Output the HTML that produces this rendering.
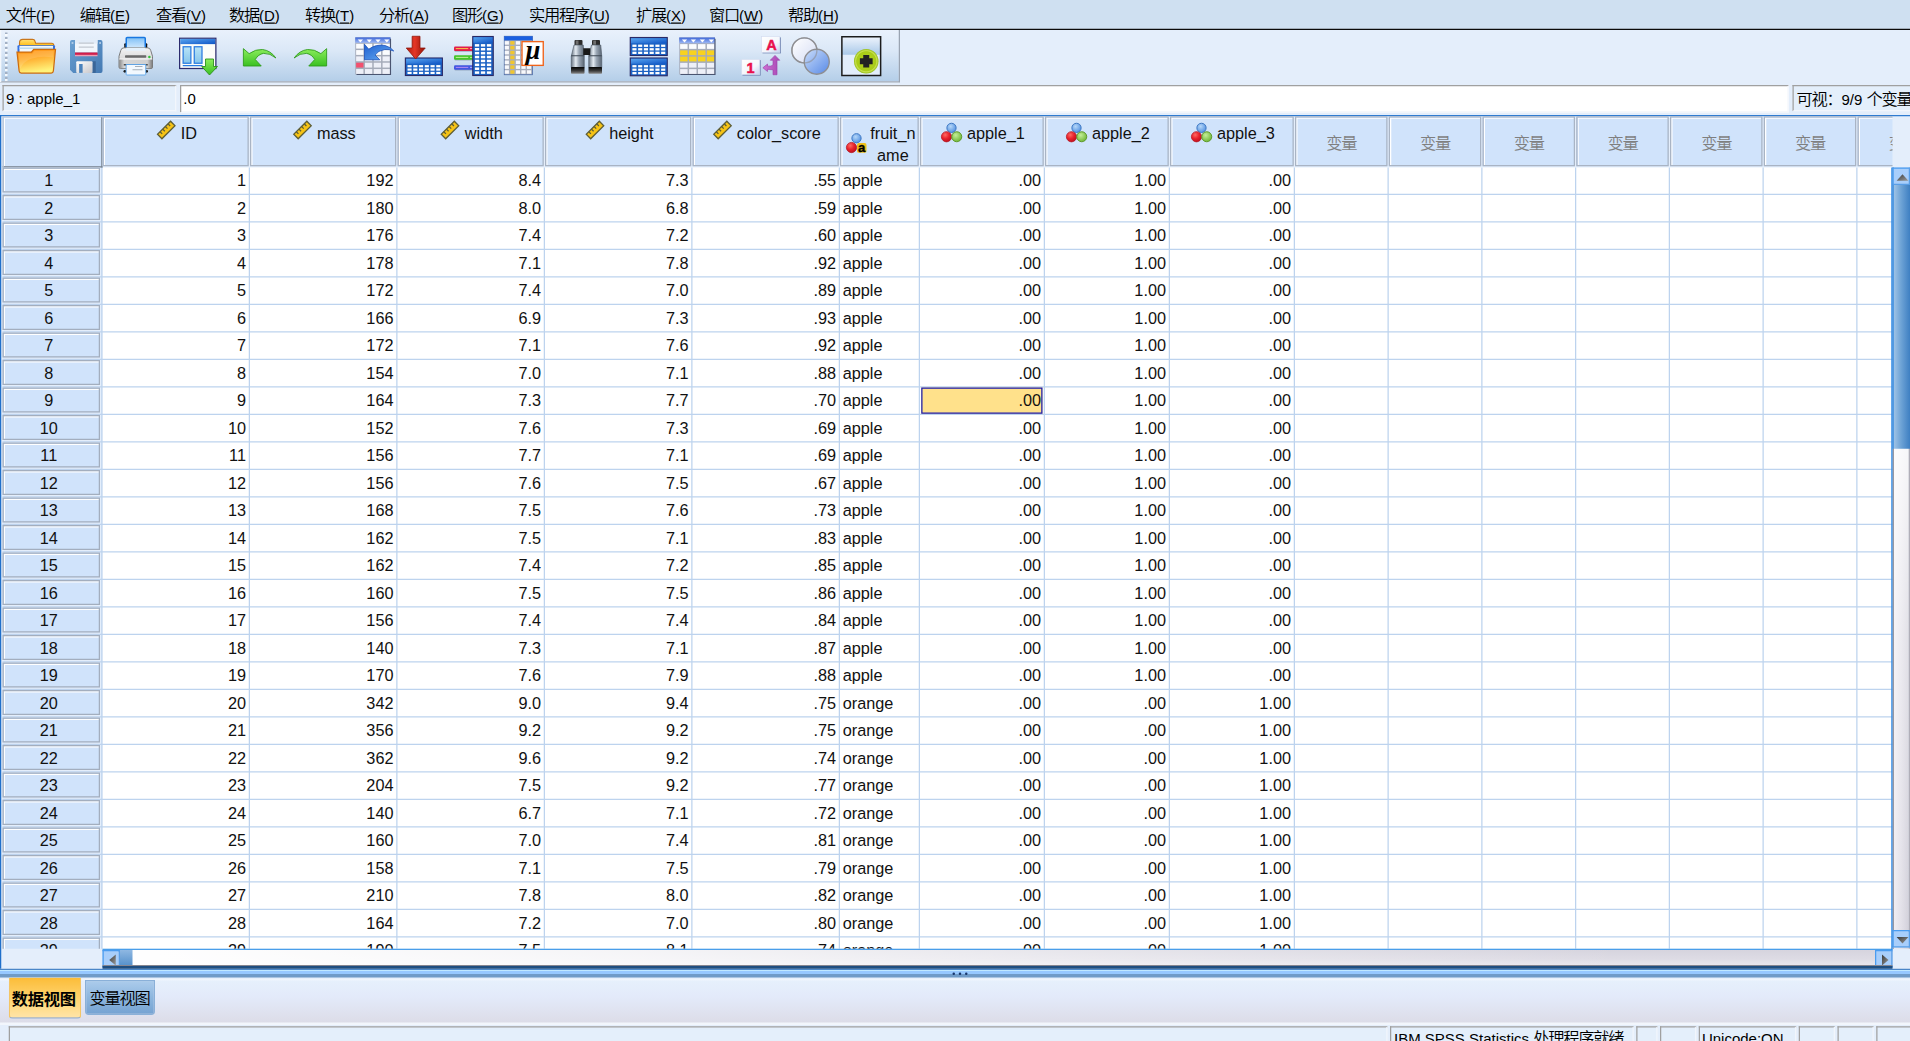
<!DOCTYPE html>
<html><head><meta charset="utf-8"><title>SPSS</title>
<style>
html,body{margin:0;padding:0;background:#e4eefb;overflow:hidden;width:1910px;height:1041px}
#app{position:absolute;left:0;top:0;width:1528px;height:833px;transform:scale(1.25);transform-origin:0 0;
 background:#e4eefb;overflow:hidden;font-family:"Liberation Sans","Noto Sans CJK SC",sans-serif;}
#app div,#app svg{position:absolute;box-sizing:border-box}
.t{white-space:nowrap}
.c{font-size:13px;letter-spacing:-1px;font-weight:350}
u{text-decoration:underline;text-underline-offset:1.1px;text-decoration-thickness:1px}
#menubar{left:0;top:0;width:1528px;height:23px;background:#cfe0f1}
#menuline{left:0;top:23px;width:1528px;height:1px;background:#0a0a0a}
#toolbar{left:0;top:24px;width:720px;height:42px;background:linear-gradient(#e9f1fc 0%,#dbe8f7 40%,#b4cee8 100%);
 border-right:1px solid #9aa4b2;border-bottom:1px solid #a3abb6;border-left:1px solid #f4f8fd}
#grip{left:3px;top:2px;width:2px;height:39px;background:repeating-linear-gradient(#a3b0c3 0 1.6px,rgba(255,255,255,.85) 1.6px 2.6px,transparent 2.6px 4px)}
.sunk{border-top:1px solid #a0a0a0;border-left:1px solid #a0a0a0;border-right:1px solid #f2f6fc;border-bottom:1px solid #f2f6fc}
#gridtop{left:0;top:92px;width:1528px;height:1px;background:#2f7bd0}
#gridleft{left:0;top:92px;width:1px;height:683px;background:#1f6fca}
#gridarea{left:0;top:0;width:1514px;height:759px;overflow:hidden}
#databg{background:#fff}
.vl{width:1px;background:#bdd3ee}
.hl{left:2px;width:1520px;height:1px;background:#bdd3ee}
.hc{top:93px;height:40px;background:#d0e3fb;border:1px solid #a9b4c4;box-shadow:inset 1px 1px 0 #fff}
.corner{left:2px;top:93px;width:80px;height:41px;background:#d0e3fb;border-top:1px solid #b7c4d6;border-left:1px solid #b7c4d6;border-right:1px solid #76808c;border-bottom:1px solid #76808c;box-shadow:inset 1px 1px 0 #fff}
.rh{left:2px;width:78px;height:20px;background:#d0e3fb;border:1px solid #a3aebe;box-shadow:inset 1px 1px 0 #fff}
.sel{background:#ffe18b;border:1px solid #1a1ab0}
.ic{overflow:visible}
#vsb{left:1514px;top:134px;width:14px;height:625px}
.vtrack{left:0;top:0;width:14px;height:625px;background:linear-gradient(rgba(255,255,255,.95) 30%,rgba(255,255,255,.35) 60%,rgba(255,255,255,0) 100%),linear-gradient(90deg,#efedf2 0%,#e2e0e8 50%,#d2d0da 100%);border-left:1px solid #7c7c86;border-right:1px solid #b0aeb8}
.vthumb{left:0;top:14px;width:14px;height:211px;background:linear-gradient(90deg,#9fc3e6 0%,#6ea3d6 45%,#3e7fc2 100%);border-left:1px solid #3b96f0}
.sbtn{width:14px;height:14px;background:#a8cefb;border:1px solid #4a9cf0;border-bottom-color:#5a9ee6;border-right-color:#5a9ee6}
#gridright{left:1513px;top:134px;width:1px;height:626px;background:#2f8ae8}
#gridbot{left:82px;top:758.8px;width:1432px;height:1.4px;background:#4a9eea}
#hsb{left:82px;top:760px;width:1432px;height:14px}
.htrack{left:0;top:0;width:1432px;height:14px;background:linear-gradient(#d6d4de 0%,#dddbe4 50%,#ebeaf0 100%);}
.htrack::after{content:"";position:absolute;left:0;top:0;right:0;bottom:0;background:linear-gradient(90deg,#fff 0%,rgba(255,255,255,.75) 30%,rgba(255,255,255,.4) 55%,rgba(255,255,255,0) 85%)}
.hthumb{left:14px;top:0;width:10px;height:14px;background:linear-gradient(#8fb8e2,#4f8cc8);}
#divider{left:0;top:775.2px;width:1528px;height:7.2px;background:linear-gradient(#4a86c8 0 1px,#c0e8ff 1px 2px,#96c8ff 2px 4px,#6f9bc8 4px 7.2px)}
#hsbsh{left:82px;top:772.4px;width:1432px;height:2.3px;background:linear-gradient(#85858f 0 1.1px,#1f4e80 1.1px 2.3px)}
.dot{width:2.4px;height:2.4px;border-radius:50%;background:#17356a}
#tabpanel{left:0;top:783px;width:1528px;height:36px;background:linear-gradient(#f4f8fd 0,#e6f0fc 2px,#e3eafa 40%,#dcdce7 100%)}
#tab1{left:6.6px;top:782px;width:58.6px;height:32.7px;background:linear-gradient(#fbbc38,#ffd777 60%,#ffe4a8);border:1px solid #f3c566;border-top:none;border-bottom:1px solid #88a8d0;border-radius:0 0 3px 3px}
#tab2{left:68px;top:784px;width:56px;height:28px;background:linear-gradient(#abcbeb,#8db6de 50%,#76a3d2);border:1px solid #8ab0d8;border-radius:0 0 3px 3px}
#status{left:0;top:818px;width:1528px;height:15px;background:linear-gradient(#f2f6fc 0 2px,#e4eefb 2px)}
.sb{background:#e4effb}
</style></head><body><div id="app">
<div id="menubar"></div><div id="menuline"></div>
<div class="t " style="left:4.7px;top:5.14px;font-size:12px;line-height:16px;color:#000;"><span class="c">文件</span>(<u>F</u>)</div>
<div class="t " style="left:63.9px;top:5.14px;font-size:12px;line-height:16px;color:#000;"><span class="c">编辑</span>(<u>E</u>)</div>
<div class="t " style="left:124.8px;top:5.14px;font-size:12px;line-height:16px;color:#000;"><span class="c">查看</span>(<u>V</u>)</div>
<div class="t " style="left:183.2px;top:5.14px;font-size:12px;line-height:16px;color:#000;"><span class="c">数据</span>(<u>D</u>)</div>
<div class="t " style="left:244px;top:5.14px;font-size:12px;line-height:16px;color:#000;"><span class="c">转换</span>(<u>T</u>)</div>
<div class="t " style="left:303.2px;top:5.14px;font-size:12px;line-height:16px;color:#000;"><span class="c">分析</span>(<u>A</u>)</div>
<div class="t " style="left:361.6px;top:5.14px;font-size:12px;line-height:16px;color:#000;"><span class="c">图形</span>(<u>G</u>)</div>
<div class="t " style="left:423.2px;top:5.14px;font-size:12px;line-height:16px;color:#000;"><span class="c">实用程序</span>(<u>U</u>)</div>
<div class="t " style="left:508.8px;top:5.14px;font-size:12px;line-height:16px;color:#000;"><span class="c">扩展</span>(<u>X</u>)</div>
<div class="t " style="left:567.2px;top:5.14px;font-size:12px;line-height:16px;color:#000;"><span class="c">窗口</span>(<u>W</u>)</div>
<div class="t " style="left:630.4px;top:5.14px;font-size:12px;line-height:16px;color:#000;"><span class="c">帮助</span>(<u>H</u>)</div>
<div id="toolbar"><div id="grip"></div></div>
<svg class="ic" style="left:13px;top:29px" width="32" height="32" viewBox="0 0 32 32"><path d="M2.6 14 V5.2 Q2.6 2.5 5.2 2.5 H13 Q14.6 2.5 15 4 L15.5 5.6 H28.4 Q30 5.6 30 7.2 V14 Z" fill="url(#gFoldB)" stroke="#c9761a" stroke-width="0.9"/><rect x="1" y="7.2" width="30" height="5.5" rx="0.8" fill="#2f6fe4"/><rect x="2.6" y="7.8" width="26.8" height="6" fill="#f2f7fc"/><path d="M2.6 9.6 H29.4" stroke="#b8dcf4" stroke-width="1.2"/><path d="M0.6 12.6 H12.2 L14 10.4 H31.4 L29.7 27.8 Q29.5 29.4 28 29.4 H4 Q2.5 29.4 2.3 27.8 Z" fill="url(#gFoldF)" stroke="#cc6c10" stroke-width="1"/><path d="M2 14 H12.8 L14.6 11.8 H30 L29.4 17 Q20 15.5 12 18 Q6 20 3 26 Z" fill="#fff" opacity="0.13"/></svg>
<svg class="ic" style="left:53px;top:29px" width="32" height="32" viewBox="0 0 32 32"><path d="M4.5 3 H27.5 Q29 3 29 4.5 V27.8 Q29 29.3 27.5 29.3 H5.6 L3 26.8 V4.5 Q3 3 4.5 3 Z" fill="url(#gFlop)"/><rect x="7" y="2.9" width="18" height="10.2" fill="#f1f6fc"/><rect x="7" y="2.9" width="18" height="3" fill="#e2ecf8"/><path d="M10 5.5 H22 M10 8.6 H22" stroke="#c2c8d0" stroke-width="1"/><rect x="7" y="13" width="18" height="1.9" fill="#d61c48"/><rect x="7" y="14.9" width="18" height="1.1" fill="#f29ab0"/><rect x="21" y="20" width="2.6" height="9.3" fill="#3a6698"/><rect x="8" y="20" width="13" height="9.3" rx="0.8" fill="url(#gMetal)"/><rect x="10.3" y="22.2" width="2.8" height="7.1" fill="#4a82bc"/><rect x="4.3" y="4.8" width="1.4" height="1.2" fill="#c4d8ee"/><rect x="26.4" y="4.8" width="1.4" height="1.2" fill="#c4d8ee"/></svg>
<svg class="ic" style="left:93px;top:29px" width="32" height="32" viewBox="0 0 32 32"><rect x="6.4" y="5.5" width="2" height="5.5" rx="0.8" fill="#101010"/><rect x="22.8" y="5.5" width="2" height="5.5" rx="0.8" fill="#101010"/><rect x="8" y="1" width="15.2" height="11" rx="0.8" fill="url(#gPaperB)" stroke="#1877e0" stroke-width="1.2"/><path d="M3.6 11.4 Q4 9.2 6.4 9.2 H24.8 Q27.2 9.2 27.6 11.4 L29 16 V24.6 Q29 25.8 27.8 25.8 H3.4 Q2.2 25.8 2.2 24.6 V16 Z" fill="url(#gPrTop)" stroke="#6c6c6c" stroke-width="0.7"/><rect x="8" y="9.2" width="15.2" height="2.4" fill="#e4f1fc"/><rect x="2.4" y="18.2" width="26.4" height="7.4" fill="url(#gPrBot)"/><path d="M2.4 18.2 H28.8" stroke="#fafafa" stroke-width="0.8"/><rect x="7" y="15.2" width="17" height="1.9" rx="0.5" fill="#6a6a6a"/><circle cx="26.5" cy="16.6" r="1" fill="#34c43a"/><circle cx="6.9" cy="28" r="1.1" fill="#1a1a1a"/><circle cx="24.3" cy="28" r="1.1" fill="#1a1a1a"/><path d="M6 22.2 H25.2 V23.4 H6 Z" fill="#4a4a4a"/><path d="M7.9 22.6 H23.6 V30.4 Q23.6 31 23 31 H8.5 Q7.9 31 7.9 30.4 Z" fill="#f2f8fe" stroke="#58a4ea" stroke-width="0.7"/><path d="M15 24.2 H21 M13 26.8 H21" stroke="#a6aeb8" stroke-width="0.9"/></svg>
<svg class="ic" style="left:143px;top:29px" width="32" height="32" viewBox="0 0 32 32"><rect x="0.7" y="1.6" width="29" height="24.2" fill="#fdfdf9" stroke="#2c2c6e" stroke-width="1"/><rect x="1.2" y="2.1" width="28" height="4.2" fill="url(#gTitle)"/><rect x="3.5" y="8.4" width="6.2" height="13.2" fill="url(#gPanel)" stroke="#2a7be0" stroke-width="1"/><rect x="12.4" y="8.4" width="6.2" height="13.2" fill="url(#gPanel)" stroke="#2a7be0" stroke-width="1"/><path d="M3.2 23.5 H19" stroke="#2a7be0" stroke-width="1"/><path d="M21.4 18.2 H27.8 V24.2 H31 L24.6 31 L18.4 24.2 H21.4 Z" fill="url(#gGreen)" stroke="#2a8e1a" stroke-width="0.7"/></svg>
<svg class="ic" style="left:193px;top:29px" width="32" height="32" viewBox="0 0 32 32"><path d="M1.7 9.9 L6.3 13.9 Q11.5 10.2 17 10.6 Q23.5 11.4 27.7 17.4 Q23 13.4 17.8 13.7 Q13.6 14.4 11.2 18.6 L16 23.8 H1.7 Z" fill="url(#gGreen)" stroke="#2e9a1a" stroke-width="0.7" stroke-linejoin="round"/></svg>
<svg class="ic" style="left:233px;top:29px" width="32" height="32" viewBox="0 0 32 32"><g transform="translate(30 0) scale(-1 1)"><path d="M1.7 9.9 L6.3 13.9 Q11.5 10.2 17 10.6 Q23.5 11.4 27.7 17.4 Q23 13.4 17.8 13.7 Q13.6 14.4 11.2 18.6 L16 23.8 H1.7 Z" fill="url(#gGreen)" stroke="#2e9a1a" stroke-width="0.7" stroke-linejoin="round"/></g></svg>
<svg class="ic" style="left:283px;top:29px" width="32" height="32" viewBox="0 0 32 32"><rect x="1.2" y="0.9" width="28.2" height="29.7" fill="#a6acba"/><rect x="1.2" y="0.9" width="28.2" height="4.4" fill="url(#gHdr)"/><rect x="1.90" y="6.00" width="5.85" height="3.86" fill="#fbfcfe"/><rect x="8.95" y="6.00" width="5.85" height="3.86" fill="#fbfcfe"/><rect x="16.00" y="6.00" width="5.85" height="3.86" fill="#fbfcfe"/><rect x="23.05" y="6.00" width="5.85" height="3.86" fill="#fbfcfe"/><rect x="1.90" y="11.06" width="5.85" height="3.86" fill="#fbfcfe"/><rect x="8.95" y="11.06" width="5.85" height="3.86" fill="#fbfcfe"/><rect x="16.00" y="11.06" width="5.85" height="3.86" fill="#fbfcfe"/><rect x="23.05" y="11.06" width="5.85" height="3.86" fill="#fbfcfe"/><rect x="1.90" y="16.12" width="5.85" height="3.86" fill="#eef0f8"/><rect x="8.95" y="16.12" width="5.85" height="3.86" fill="#eef0f8"/><rect x="16.00" y="16.12" width="5.85" height="3.86" fill="#eef0f8"/><rect x="23.05" y="16.12" width="5.85" height="3.86" fill="#eef0f8"/><rect x="1.90" y="21.18" width="5.85" height="3.86" fill="#f2506e"/><rect x="8.95" y="21.18" width="5.85" height="3.86" fill="#eef0f8"/><rect x="16.00" y="21.18" width="5.85" height="3.86" fill="#eef0f8"/><rect x="23.05" y="21.18" width="5.85" height="3.86" fill="#eef0f8"/><rect x="1.90" y="26.24" width="5.85" height="3.86" fill="#eef0f8"/><rect x="8.95" y="26.24" width="5.85" height="3.86" fill="#eef0f8"/><rect x="16.00" y="26.24" width="5.85" height="3.86" fill="#eef0f8"/><rect x="23.05" y="26.24" width="5.85" height="3.86" fill="#eef0f8"/><path d="M3.22 2.5 h4.2 l-2.1 2.4 z" fill="#fff"/><path d="M10.28 2.5 h4.2 l-2.1 2.4 z" fill="#fff"/><path d="M17.32 2.5 h4.2 l-2.1 2.4 z" fill="#fff"/><path d="M24.37 2.5 h4.2 l-2.1 2.4 z" fill="#fff"/><path d="M29.4 1.9 V30.599999999999998 H2.2" fill="none" stroke="#4a5470" stroke-width="0.9"/><path d="M8.6 6.4 L12 10.4 Q18 6 25 7.4 Q29.6 8.6 32 11.8 Q28.4 10.2 24.8 10.6 Q19.4 11.4 17 15 L20.8 18.8 H8.6 Z" fill="url(#gBlueArr)" stroke="#1c50b8" stroke-width="0.6" stroke-linejoin="round"/></svg>
<svg class="ic" style="left:323px;top:29px" width="32" height="32" viewBox="0 0 32 32"><rect x="1.3" y="17.4" width="29.6" height="14" fill="#1b62c4" stroke="#2a2a66" stroke-width="0.9"/><rect x="1.9" y="18.0" width="28.400000000000002" height="4" fill="url(#gTitle)"/><rect x="3.00" y="23.10" width="3.31" height="1.73" fill="#fff"/><rect x="7.60" y="23.10" width="3.31" height="1.73" fill="#fff"/><rect x="12.20" y="23.10" width="3.31" height="1.73" fill="#fff"/><rect x="16.80" y="23.10" width="3.31" height="1.73" fill="#fff"/><rect x="21.40" y="23.10" width="3.31" height="1.73" fill="#fff"/><rect x="26.00" y="23.10" width="3.31" height="1.73" fill="#fff"/><rect x="3.00" y="25.80" width="3.31" height="1.73" fill="#fff"/><rect x="7.60" y="25.80" width="3.31" height="1.73" fill="#fff"/><rect x="12.20" y="25.80" width="3.31" height="1.73" fill="#fff"/><rect x="16.80" y="25.80" width="3.31" height="1.73" fill="#fff"/><rect x="21.40" y="25.80" width="3.31" height="1.73" fill="#fff"/><rect x="26.00" y="25.80" width="3.31" height="1.73" fill="#fff"/><rect x="3.00" y="28.50" width="3.31" height="1.73" fill="#fff"/><rect x="7.60" y="28.50" width="3.31" height="1.73" fill="#fff"/><rect x="12.20" y="28.50" width="3.31" height="1.73" fill="#fff"/><rect x="16.80" y="28.50" width="3.31" height="1.73" fill="#fff"/><rect x="21.40" y="28.50" width="3.31" height="1.73" fill="#fff"/><rect x="26.00" y="28.50" width="3.31" height="1.73" fill="#fff"/><path d="M6.7 0 H13 V9.4 H17.2 L9.5 18.2 L2 9.4 H6.7 Z" fill="url(#gRed)" stroke="#8e1408" stroke-width="0.6" stroke-linejoin="round"/></svg>
<svg class="ic" style="left:363px;top:29px" width="32" height="32" viewBox="0 0 32 32"><rect x="0.6" y="10.7" width="17" height="1.6" rx="0.8" fill="#5a6a86" opacity="0.45"/><rect x="0.2" y="8.1" width="17.6" height="3.6" rx="1" fill="#e21c4a"/><rect x="1.6" y="9.4" width="10" height="0.9" fill="#f6b64a"/><rect x="13" y="9.4" width="2.4" height="0.9" fill="#f6a0b4"/><rect x="0.6" y="17.8" width="17" height="1.6" rx="0.8" fill="#5a6a86" opacity="0.45"/><rect x="0.2" y="15.2" width="17.6" height="3.6" rx="1" fill="#44c428"/><rect x="1.6" y="16.5" width="10" height="0.9" fill="#b4ec8c"/><rect x="13" y="16.5" width="2.4" height="0.9" fill="#b4ec8c"/><rect x="0.6" y="25.8" width="17" height="1.6" rx="0.8" fill="#5a6a86" opacity="0.45"/><rect x="0.2" y="23.2" width="17.6" height="3.6" rx="1" fill="#4256e0"/><rect x="1.6" y="24.5" width="10" height="0.9" fill="#a884f0"/><rect x="13" y="24.5" width="2.4" height="0.9" fill="#98a8f8"/><rect x="15.2" y="0.2" width="16.4" height="31.2" fill="#1b62c4" stroke="#2a2a66" stroke-width="0.9"/><rect x="15.799999999999999" y="0.8" width="15.2" height="4.4" fill="url(#gTitle)"/><rect x="16.90" y="6.30" width="3.46" height="1.99" fill="#fff"/><rect x="21.70" y="6.30" width="3.46" height="1.99" fill="#fff"/><rect x="26.50" y="6.30" width="3.46" height="1.99" fill="#fff"/><rect x="16.90" y="9.41" width="3.46" height="1.99" fill="#fff"/><rect x="21.70" y="9.41" width="3.46" height="1.99" fill="#fff"/><rect x="26.50" y="9.41" width="3.46" height="1.99" fill="#fff"/><rect x="16.90" y="12.53" width="3.46" height="1.99" fill="#fff"/><rect x="21.70" y="12.53" width="3.46" height="1.99" fill="#fff"/><rect x="26.50" y="12.53" width="3.46" height="1.99" fill="#fff"/><rect x="16.90" y="15.64" width="3.46" height="1.99" fill="#fff"/><rect x="21.70" y="15.64" width="3.46" height="1.99" fill="#fff"/><rect x="26.50" y="15.64" width="3.46" height="1.99" fill="#fff"/><rect x="16.90" y="18.75" width="3.46" height="1.99" fill="#fff"/><rect x="21.70" y="18.75" width="3.46" height="1.99" fill="#fff"/><rect x="26.50" y="18.75" width="3.46" height="1.99" fill="#fff"/><rect x="16.90" y="21.86" width="3.46" height="1.99" fill="#fff"/><rect x="21.70" y="21.86" width="3.46" height="1.99" fill="#fff"/><rect x="26.50" y="21.86" width="3.46" height="1.99" fill="#fff"/><rect x="16.90" y="24.97" width="3.46" height="1.99" fill="#fff"/><rect x="21.70" y="24.97" width="3.46" height="1.99" fill="#fff"/><rect x="26.50" y="24.97" width="3.46" height="1.99" fill="#fff"/><rect x="16.90" y="28.09" width="3.46" height="1.99" fill="#fff"/><rect x="21.70" y="28.09" width="3.46" height="1.99" fill="#fff"/><rect x="26.50" y="28.09" width="3.46" height="1.99" fill="#fff"/></svg>
<svg class="ic" style="left:403px;top:29px" width="32" height="32" viewBox="0 0 32 32"><rect x="0.4" y="0" width="22.6" height="30.8" fill="#a8aebc" stroke="#4a6aa8" stroke-width="0.6"/><rect x="0.4" y="0" width="22.6" height="3.3" fill="#1a5fe0"/><rect x="0.80" y="3.90" width="3.34" height="2.79" fill="#f8f9fc"/><rect x="5.24" y="3.90" width="3.34" height="2.79" fill="#f0c630"/><rect x="9.68" y="3.90" width="3.34" height="2.79" fill="#f8f9fc"/><rect x="14.12" y="3.90" width="3.34" height="2.79" fill="#f8f9fc"/><rect x="18.56" y="3.90" width="3.34" height="2.79" fill="#f8f9fc"/><rect x="0.80" y="7.79" width="3.34" height="2.79" fill="#f8f9fc"/><rect x="5.24" y="7.79" width="3.34" height="2.79" fill="#f0c630"/><rect x="9.68" y="7.79" width="3.34" height="2.79" fill="#f8f9fc"/><rect x="14.12" y="7.79" width="3.34" height="2.79" fill="#f8f9fc"/><rect x="18.56" y="7.79" width="3.34" height="2.79" fill="#f8f9fc"/><rect x="0.80" y="11.67" width="3.34" height="2.79" fill="#f8f9fc"/><rect x="5.24" y="11.67" width="3.34" height="2.79" fill="#f0c630"/><rect x="9.68" y="11.67" width="3.34" height="2.79" fill="#f8f9fc"/><rect x="14.12" y="11.67" width="3.34" height="2.79" fill="#f8f9fc"/><rect x="18.56" y="11.67" width="3.34" height="2.79" fill="#f8f9fc"/><rect x="0.80" y="15.56" width="3.34" height="2.79" fill="#f8f9fc"/><rect x="5.24" y="15.56" width="3.34" height="2.79" fill="#f0c630"/><rect x="9.68" y="15.56" width="3.34" height="2.79" fill="#f8f9fc"/><rect x="14.12" y="15.56" width="3.34" height="2.79" fill="#f8f9fc"/><rect x="18.56" y="15.56" width="3.34" height="2.79" fill="#f8f9fc"/><rect x="0.80" y="19.44" width="3.34" height="2.79" fill="#f8f9fc"/><rect x="5.24" y="19.44" width="3.34" height="2.79" fill="#f0c630"/><rect x="9.68" y="19.44" width="3.34" height="2.79" fill="#f8f9fc"/><rect x="14.12" y="19.44" width="3.34" height="2.79" fill="#f8f9fc"/><rect x="18.56" y="19.44" width="3.34" height="2.79" fill="#f8f9fc"/><rect x="0.80" y="23.33" width="3.34" height="2.79" fill="#f8f9fc"/><rect x="5.24" y="23.33" width="3.34" height="2.79" fill="#f0c630"/><rect x="9.68" y="23.33" width="3.34" height="2.79" fill="#f8f9fc"/><rect x="14.12" y="23.33" width="3.34" height="2.79" fill="#f8f9fc"/><rect x="18.56" y="23.33" width="3.34" height="2.79" fill="#f8f9fc"/><rect x="0.80" y="27.21" width="3.34" height="2.79" fill="#f8f9fc"/><rect x="5.24" y="27.21" width="3.34" height="2.79" fill="#f0c630"/><rect x="9.68" y="27.21" width="3.34" height="2.79" fill="#f8f9fc"/><rect x="14.12" y="27.21" width="3.34" height="2.79" fill="#f8f9fc"/><rect x="18.56" y="27.21" width="3.34" height="2.79" fill="#f8f9fc"/><rect x="14.6" y="4.3" width="17" height="19" fill="#fff" stroke="#f0641c" stroke-width="1.1"/><text x="23.4" y="17.8" font-family="Liberation Serif,serif" font-size="21" font-weight="bold" font-style="italic" text-anchor="middle" fill="#000">μ</text></svg>
<svg class="ic" style="left:453px;top:29px" width="32" height="32" viewBox="0 0 32 32"><rect x="6.6" y="2.9" width="6.4" height="4.4" rx="0.8" fill="#2c2c2c"/><rect x="7.6" y="3.4" width="2.2" height="3.4" fill="#8a8a8a" opacity="0.7"/><path d="M6.2 7 H13.6 L14.4 16 V25 H4 V16 Z" fill="url(#gBino)" stroke="#4c5664" stroke-width="0.5"/><path d="M4 15.6 H14.4" stroke="#3e4854" stroke-width="0.8"/><rect x="3.8" y="24.6" width="10.8" height="5.4" rx="0.6" fill="url(#gBinoB)"/><rect x="20.6" y="2.9" width="6.4" height="4.4" rx="0.8" fill="#2c2c2c"/><rect x="21.6" y="3.4" width="2.2" height="3.4" fill="#8a8a8a" opacity="0.7"/><path d="M20.2 7 H27.6 L28.4 16 V25 H18 V16 Z" fill="url(#gBino)" stroke="#4c5664" stroke-width="0.5"/><path d="M18 15.6 H28.4" stroke="#3e4854" stroke-width="0.8"/><rect x="17.8" y="24.6" width="10.8" height="5.4" rx="0.6" fill="url(#gBinoB)"/><rect x="13.6" y="9.6" width="5.6" height="5.4" fill="#181818"/></svg>
<svg class="ic" style="left:503px;top:29px" width="32" height="32" viewBox="0 0 32 32"><rect x="1.2" y="1" width="29.6" height="14.4" fill="#1b62c4" stroke="#2a2a66" stroke-width="0.9"/><rect x="1.7999999999999998" y="1.6" width="28.400000000000002" height="4" fill="url(#gTitle)"/><rect x="2.90" y="6.70" width="3.31" height="1.81" fill="#fff"/><rect x="7.50" y="6.70" width="3.31" height="1.81" fill="#fff"/><rect x="12.10" y="6.70" width="3.31" height="1.81" fill="#fff"/><rect x="16.70" y="6.70" width="3.31" height="1.81" fill="#fff"/><rect x="21.30" y="6.70" width="3.31" height="1.81" fill="#fff"/><rect x="25.90" y="6.70" width="3.31" height="1.81" fill="#fff"/><rect x="2.90" y="9.53" width="3.31" height="1.81" fill="#fff"/><rect x="7.50" y="9.53" width="3.31" height="1.81" fill="#fff"/><rect x="12.10" y="9.53" width="3.31" height="1.81" fill="#fff"/><rect x="16.70" y="9.53" width="3.31" height="1.81" fill="#fff"/><rect x="21.30" y="9.53" width="3.31" height="1.81" fill="#fff"/><rect x="25.90" y="9.53" width="3.31" height="1.81" fill="#fff"/><rect x="2.90" y="12.37" width="3.31" height="1.81" fill="#fff"/><rect x="7.50" y="12.37" width="3.31" height="1.81" fill="#fff"/><rect x="12.10" y="12.37" width="3.31" height="1.81" fill="#fff"/><rect x="16.70" y="12.37" width="3.31" height="1.81" fill="#fff"/><rect x="21.30" y="12.37" width="3.31" height="1.81" fill="#fff"/><rect x="25.90" y="12.37" width="3.31" height="1.81" fill="#fff"/><rect x="1.2" y="17.4" width="29.6" height="14.2" fill="#1b62c4" stroke="#2a2a66" stroke-width="0.9"/><rect x="1.7999999999999998" y="18.0" width="28.400000000000002" height="4" fill="url(#gTitle)"/><rect x="2.90" y="23.10" width="3.31" height="1.77" fill="#fff"/><rect x="7.50" y="23.10" width="3.31" height="1.77" fill="#fff"/><rect x="12.10" y="23.10" width="3.31" height="1.77" fill="#fff"/><rect x="16.70" y="23.10" width="3.31" height="1.77" fill="#fff"/><rect x="21.30" y="23.10" width="3.31" height="1.77" fill="#fff"/><rect x="25.90" y="23.10" width="3.31" height="1.77" fill="#fff"/><rect x="2.90" y="25.87" width="3.31" height="1.77" fill="#fff"/><rect x="7.50" y="25.87" width="3.31" height="1.77" fill="#fff"/><rect x="12.10" y="25.87" width="3.31" height="1.77" fill="#fff"/><rect x="16.70" y="25.87" width="3.31" height="1.77" fill="#fff"/><rect x="21.30" y="25.87" width="3.31" height="1.77" fill="#fff"/><rect x="25.90" y="25.87" width="3.31" height="1.77" fill="#fff"/><rect x="2.90" y="28.63" width="3.31" height="1.77" fill="#fff"/><rect x="7.50" y="28.63" width="3.31" height="1.77" fill="#fff"/><rect x="12.10" y="28.63" width="3.31" height="1.77" fill="#fff"/><rect x="16.70" y="28.63" width="3.31" height="1.77" fill="#fff"/><rect x="21.30" y="28.63" width="3.31" height="1.77" fill="#fff"/><rect x="25.90" y="28.63" width="3.31" height="1.77" fill="#fff"/></svg>
<svg class="ic" style="left:543px;top:29px" width="32" height="32" viewBox="0 0 32 32"><rect x="0.4" y="1" width="28.6" height="29.6" fill="#a6acba"/><rect x="0.4" y="1" width="28.6" height="4.6" fill="url(#gHdr)"/><rect x="1.10" y="6.30" width="5.95" height="3.80" fill="#fbfcfe"/><rect x="8.25" y="6.30" width="5.95" height="3.80" fill="#fbfcfe"/><rect x="15.40" y="6.30" width="5.95" height="3.80" fill="#fbfcfe"/><rect x="22.55" y="6.30" width="5.95" height="3.80" fill="#fbfcfe"/><rect x="1.10" y="11.30" width="5.95" height="3.80" fill="#f8d21e"/><rect x="8.25" y="11.30" width="5.95" height="3.80" fill="#f8d21e"/><rect x="15.40" y="11.30" width="5.95" height="3.80" fill="#f8d21e"/><rect x="22.55" y="11.30" width="5.95" height="3.80" fill="#f8d21e"/><rect x="1.10" y="16.30" width="5.95" height="3.80" fill="#f8d21e"/><rect x="8.25" y="16.30" width="5.95" height="3.80" fill="#f8d21e"/><rect x="15.40" y="16.30" width="5.95" height="3.80" fill="#f8d21e"/><rect x="22.55" y="16.30" width="5.95" height="3.80" fill="#f8d21e"/><rect x="1.10" y="21.30" width="5.95" height="3.80" fill="#eef0f8"/><rect x="8.25" y="21.30" width="5.95" height="3.80" fill="#eef0f8"/><rect x="15.40" y="21.30" width="5.95" height="3.80" fill="#eef0f8"/><rect x="22.55" y="21.30" width="5.95" height="3.80" fill="#eef0f8"/><rect x="1.10" y="26.30" width="5.95" height="3.80" fill="#eef0f8"/><rect x="8.25" y="26.30" width="5.95" height="3.80" fill="#eef0f8"/><rect x="15.40" y="26.30" width="5.95" height="3.80" fill="#eef0f8"/><rect x="22.55" y="26.30" width="5.95" height="3.80" fill="#eef0f8"/><path d="M2.48 2.6 h4.2 l-2.1 2.4 z" fill="#fff"/><path d="M9.62 2.6 h4.2 l-2.1 2.4 z" fill="#fff"/><path d="M16.78 2.6 h4.2 l-2.1 2.4 z" fill="#fff"/><path d="M23.93 2.6 h4.2 l-2.1 2.4 z" fill="#fff"/><path d="M29.0 2 V30.6 H1.4" fill="none" stroke="#4a5470" stroke-width="0.9"/></svg>
<svg class="ic" style="left:593px;top:29px" width="32" height="32" viewBox="0 0 32 32"><rect x="17" y="0.9" width="14.8" height="12.8" fill="#7488b4"/><rect x="16.3" y="0.3" width="14.6" height="12.6" fill="url(#gLbl)" stroke="#d4dcf0" stroke-width="0.5"/><text x="24.2" y="11" font-family="Liberation Sans,sans-serif" font-size="11.6" font-weight="bold" text-anchor="middle" fill="#e8104c" stroke="#e8104c" stroke-width="0.4">A</text><rect x="1" y="19.1" width="14.6" height="12.4" fill="#7488b4"/><rect x="0.4" y="18.5" width="14.4" height="12.2" fill="url(#gLbl)" stroke="#d4dcf0" stroke-width="0.5"/><text x="7.4" y="29.1" font-family="Liberation Sans,sans-serif" font-size="11.6" font-weight="bold" text-anchor="middle" fill="#e8104c" stroke="#e8104c" stroke-width="0.4">1</text><path d="M25.4 30.8 V26.8 Q23.6 26.8 22.4 26.6 L21 26.4 V28.2 L17.3 25.2 L21 22.2 V23.9 Q24 24.2 25.4 23 V19.2 H23.2 L27 15.3 L30.8 19.2 H28.6 V30.8 Z" fill="url(#gPurp)" stroke="#9a3ea8" stroke-width="0.5" stroke-linejoin="round"/></svg>
<svg class="ic" style="left:633px;top:29px" width="32" height="32" viewBox="0 0 32 32"><circle cx="10.5" cy="11.3" r="10" fill="url(#gC1)" stroke="#8e8e92" stroke-width="1.1"/><circle cx="20.4" cy="20.4" r="10" fill="url(#gC2)" stroke="#8e8e92" stroke-width="1.1" fill-opacity="0.92"/><circle cx="10.5" cy="11.3" r="10" fill="none" stroke="#8e8e92" stroke-width="1.1" opacity="0.55"/></svg>
<svg class="ic" style="left:673px;top:29px" width="32" height="32" viewBox="0 0 32 32"><rect x="0.5" y="0.4" width="31" height="31" fill="#e2edfb"/><rect x="0.5" y="0.4" width="31" height="14.4" fill="url(#gBoxT)"/><rect x="0.5" y="0.4" width="31" height="31" fill="none" stroke="#1c1c1c" stroke-width="1.2"/><circle cx="20" cy="20" r="9.8" fill="url(#gLime)"/><path d="M17.6 14.9 H22.4 V17.6 H25.1 V22.4 H22.4 V25 H17.6 V22.4 H14.9 V17.6 H17.6 Z" fill="#222"/></svg>
<div class="sunk" style="left:2px;top:68px;width:139px;height:21px;background:#e4effb"></div>
<div class="t " style="left:4.9px;top:71.24px;font-size:12px;line-height:16px;color:#000;">9 : apple_1</div>
<div class="sunk" style="left:144px;top:68px;width:1287px;height:22px;background:#fff"></div>
<div class="t " style="left:146.6px;top:71.24px;font-size:12px;line-height:16px;color:#000;">.0</div>
<div class="sunk" style="left:1434px;top:68px;width:100px;height:21px;background:#e4effb"></div>
<div class="t " style="left:1437.2px;top:71.64px;font-size:12px;line-height:16px;color:#000;"><span class="c">可视：</span>9/9 <span class="c">个变量</span></div>
<div id="gridtop"></div><div id="gridleft"></div>
<div id="gridarea">
<div id="databg" style="left:82px;top:134px;width:1432px;height:625px"></div>
<div class="vl" style="left:81px;top:134px;height:626px"></div>
<div class="vl" style="left:199px;top:134px;height:626px"></div>
<div class="vl" style="left:317px;top:134px;height:626px"></div>
<div class="vl" style="left:435px;top:134px;height:626px"></div>
<div class="vl" style="left:553px;top:134px;height:626px"></div>
<div class="vl" style="left:671px;top:134px;height:626px"></div>
<div class="vl" style="left:735px;top:134px;height:626px"></div>
<div class="vl" style="left:835px;top:134px;height:626px"></div>
<div class="vl" style="left:935px;top:134px;height:626px"></div>
<div class="vl" style="left:1035px;top:134px;height:626px"></div>
<div class="vl" style="left:1110px;top:134px;height:626px"></div>
<div class="vl" style="left:1185px;top:134px;height:626px"></div>
<div class="vl" style="left:1260px;top:134px;height:626px"></div>
<div class="vl" style="left:1335px;top:134px;height:626px"></div>
<div class="vl" style="left:1410px;top:134px;height:626px"></div>
<div class="vl" style="left:1485px;top:134px;height:626px"></div>
<div class="hl" style="top:155px"></div>
<div class="hl" style="top:177px"></div>
<div class="hl" style="top:199px"></div>
<div class="hl" style="top:221px"></div>
<div class="hl" style="top:243px"></div>
<div class="hl" style="top:265px"></div>
<div class="hl" style="top:287px"></div>
<div class="hl" style="top:309px"></div>
<div class="hl" style="top:331px"></div>
<div class="hl" style="top:353px"></div>
<div class="hl" style="top:375px"></div>
<div class="hl" style="top:397px"></div>
<div class="hl" style="top:419px"></div>
<div class="hl" style="top:441px"></div>
<div class="hl" style="top:463px"></div>
<div class="hl" style="top:485px"></div>
<div class="hl" style="top:507px"></div>
<div class="hl" style="top:529px"></div>
<div class="hl" style="top:551px"></div>
<div class="hl" style="top:573px"></div>
<div class="hl" style="top:595px"></div>
<div class="hl" style="top:617px"></div>
<div class="hl" style="top:639px"></div>
<div class="hl" style="top:661px"></div>
<div class="hl" style="top:683px"></div>
<div class="hl" style="top:705px"></div>
<div class="hl" style="top:727px"></div>
<div class="hl" style="top:749px"></div>
<div class="hl" style="top:771px"></div>
<div class="corner"></div>
<div class="hc" style="left:82px;width:117px"></div>
<div class="hc" style="left:200px;width:117px"></div>
<div class="hc" style="left:318px;width:117px"></div>
<div class="hc" style="left:436px;width:117px"></div>
<div class="hc" style="left:554px;width:117px"></div>
<div class="hc" style="left:672px;width:63px"></div>
<div class="hc" style="left:736px;width:99px"></div>
<div class="hc" style="left:836px;width:99px"></div>
<div class="hc" style="left:936px;width:99px"></div>
<div class="hc" style="left:1036px;width:74px"></div>
<div class="hc" style="left:1111px;width:74px"></div>
<div class="hc" style="left:1186px;width:74px"></div>
<div class="hc" style="left:1261px;width:74px"></div>
<div class="hc" style="left:1336px;width:74px"></div>
<div class="hc" style="left:1411px;width:74px"></div>
<div class="hc" style="left:1486px;width:74px"></div>
<svg class="ic" style="left:124.75px;top:96.2px" width="16" height="16" viewBox="0 0 16 16"><g transform="rotate(-45 8 8)"><rect x="0.6" y="5.5" width="14.8" height="5" fill="#f6c315" stroke="#5e5e36" stroke-width="1"/><path d="M3.5 5.5v2.4M6.5 5.5v2.4M9.5 5.5v2.4M12.5 5.5v2.4" stroke="#5e5e36" stroke-width="1"/></g></svg>
<div class="t " style="left:144.55px;top:97.90px;font-size:13px;line-height:17px;color:#111;">ID</div>
<svg class="ic" style="left:233.72px;top:96.2px" width="16" height="16" viewBox="0 0 16 16"><g transform="rotate(-45 8 8)"><rect x="0.6" y="5.5" width="14.8" height="5" fill="#f6c315" stroke="#5e5e36" stroke-width="1"/><path d="M3.5 5.5v2.4M6.5 5.5v2.4M9.5 5.5v2.4M12.5 5.5v2.4" stroke="#5e5e36" stroke-width="1"/></g></svg>
<div class="t " style="left:253.5215px;top:97.90px;font-size:13px;line-height:17px;color:#111;">mass</div>
<svg class="ic" style="left:352.08px;top:96.2px" width="16" height="16" viewBox="0 0 16 16"><g transform="rotate(-45 8 8)"><rect x="0.6" y="5.5" width="14.8" height="5" fill="#f6c315" stroke="#5e5e36" stroke-width="1"/><path d="M3.5 5.5v2.4M6.5 5.5v2.4M9.5 5.5v2.4M12.5 5.5v2.4" stroke="#5e5e36" stroke-width="1"/></g></svg>
<div class="t " style="left:371.879px;top:97.90px;font-size:13px;line-height:17px;color:#111;">width</div>
<svg class="ic" style="left:467.54px;top:96.2px" width="16" height="16" viewBox="0 0 16 16"><g transform="rotate(-45 8 8)"><rect x="0.6" y="5.5" width="14.8" height="5" fill="#f6c315" stroke="#5e5e36" stroke-width="1"/><path d="M3.5 5.5v2.4M6.5 5.5v2.4M9.5 5.5v2.4M12.5 5.5v2.4" stroke="#5e5e36" stroke-width="1"/></g></svg>
<div class="t " style="left:487.344px;top:97.90px;font-size:13px;line-height:17px;color:#111;">height</div>
<svg class="ic" style="left:569.66px;top:96.2px" width="16" height="16" viewBox="0 0 16 16"><g transform="rotate(-45 8 8)"><rect x="0.6" y="5.5" width="14.8" height="5" fill="#f6c315" stroke="#5e5e36" stroke-width="1"/><path d="M3.5 5.5v2.4M6.5 5.5v2.4M9.5 5.5v2.4M12.5 5.5v2.4" stroke="#5e5e36" stroke-width="1"/></g></svg>
<div class="t " style="left:589.458px;top:97.90px;font-size:13px;line-height:17px;color:#111;">color_score</div>
<svg class="ic" style="left:677px;top:106px" width="17" height="17" viewBox="0 0 17 17"><circle cx="8.2" cy="4.6" r="3.7" fill="url(#bB)" stroke="#3f79c4" stroke-width="0.8"/><circle cx="4.2" cy="12" r="4.1" fill="url(#bR)" stroke="#b41622" stroke-width="0.6"/><rect x="8.6" y="8.4" width="7.6" height="7.8" rx="1.5" fill="#f0c01a"/><text x="12.4" y="15.6" font-family="Liberation Sans,sans-serif" font-weight="bold" font-size="10.5" text-anchor="middle" fill="#000" stroke="#000" stroke-width="0.3">a</text></svg>
<div class="t " style="left:696.2365px;top:97.90px;font-size:13px;line-height:17px;color:#111;">fruit_n</div>
<div class="t " style="left:701.6574999999999px;top:115.80px;font-size:13px;line-height:17px;color:#111;">ame</div>
<svg class="ic" style="left:753.12px;top:97.5px" width="16" height="16" viewBox="0 0 16 16"><circle cx="8.2" cy="4.3" r="3.7" fill="url(#bB)" stroke="#3f79c4" stroke-width="0.8"/><circle cx="4.2" cy="11.4" r="4.1" fill="url(#bR)" stroke="#b41622" stroke-width="0.6"/><circle cx="12.4" cy="11.4" r="4" fill="url(#bG)" stroke="#5f9a2c" stroke-width="0.8"/></svg>
<div class="t " style="left:773.623px;top:97.90px;font-size:13px;line-height:17px;color:#111;">apple_1</div>
<svg class="ic" style="left:853.12px;top:97.5px" width="16" height="16" viewBox="0 0 16 16"><circle cx="8.2" cy="4.3" r="3.7" fill="url(#bB)" stroke="#3f79c4" stroke-width="0.8"/><circle cx="4.2" cy="11.4" r="4.1" fill="url(#bR)" stroke="#b41622" stroke-width="0.6"/><circle cx="12.4" cy="11.4" r="4" fill="url(#bG)" stroke="#5f9a2c" stroke-width="0.8"/></svg>
<div class="t " style="left:873.623px;top:97.90px;font-size:13px;line-height:17px;color:#111;">apple_2</div>
<svg class="ic" style="left:953.12px;top:97.5px" width="16" height="16" viewBox="0 0 16 16"><circle cx="8.2" cy="4.3" r="3.7" fill="url(#bB)" stroke="#3f79c4" stroke-width="0.8"/><circle cx="4.2" cy="11.4" r="4.1" fill="url(#bR)" stroke="#b41622" stroke-width="0.6"/><circle cx="12.4" cy="11.4" r="4" fill="url(#bG)" stroke="#5f9a2c" stroke-width="0.8"/></svg>
<div class="t " style="left:973.623px;top:97.90px;font-size:13px;line-height:17px;color:#111;">apple_3</div>
<div class="t " style="left:1036px;top:106.74px;font-size:12px;line-height:16px;color:#7f7f7f;width:74px;text-align:center;"><span class="c">变量</span></div>
<div class="t " style="left:1111px;top:106.74px;font-size:12px;line-height:16px;color:#7f7f7f;width:74px;text-align:center;"><span class="c">变量</span></div>
<div class="t " style="left:1186px;top:106.74px;font-size:12px;line-height:16px;color:#7f7f7f;width:74px;text-align:center;"><span class="c">变量</span></div>
<div class="t " style="left:1261px;top:106.74px;font-size:12px;line-height:16px;color:#7f7f7f;width:74px;text-align:center;"><span class="c">变量</span></div>
<div class="t " style="left:1336px;top:106.74px;font-size:12px;line-height:16px;color:#7f7f7f;width:74px;text-align:center;"><span class="c">变量</span></div>
<div class="t " style="left:1411px;top:106.74px;font-size:12px;line-height:16px;color:#7f7f7f;width:74px;text-align:center;"><span class="c">变量</span></div>
<div class="t " style="left:1486px;top:106.74px;font-size:12px;line-height:16px;color:#7f7f7f;width:74px;text-align:center;"><span class="c">变量</span></div>
<div class="rh" style="top:134px"></div>
<div class="t " style="left:0px;top:136.30px;font-size:13px;line-height:17px;color:#111;width:78px;text-align:center;">1</div>
<div class="t " style="left:82px;top:136.30px;font-size:13px;line-height:17px;color:#111;width:114.8px;text-align:right;">1</div>
<div class="t " style="left:200px;top:136.30px;font-size:13px;line-height:17px;color:#111;width:114.8px;text-align:right;">192</div>
<div class="t " style="left:318px;top:136.30px;font-size:13px;line-height:17px;color:#111;width:114.8px;text-align:right;">8.4</div>
<div class="t " style="left:436px;top:136.30px;font-size:13px;line-height:17px;color:#111;width:114.8px;text-align:right;">7.3</div>
<div class="t " style="left:554px;top:136.30px;font-size:13px;line-height:17px;color:#111;width:114.8px;text-align:right;">.55</div>
<div class="t " style="left:674.2px;top:136.30px;font-size:13px;line-height:17px;color:#111;">apple</div>
<div class="t " style="left:736px;top:136.30px;font-size:13px;line-height:17px;color:#111;width:96.8px;text-align:right;">.00</div>
<div class="t " style="left:836px;top:136.30px;font-size:13px;line-height:17px;color:#111;width:96.8px;text-align:right;">1.00</div>
<div class="t " style="left:936px;top:136.30px;font-size:13px;line-height:17px;color:#111;width:96.8px;text-align:right;">.00</div>
<div class="rh" style="top:156px"></div>
<div class="t " style="left:0px;top:158.30px;font-size:13px;line-height:17px;color:#111;width:78px;text-align:center;">2</div>
<div class="t " style="left:82px;top:158.30px;font-size:13px;line-height:17px;color:#111;width:114.8px;text-align:right;">2</div>
<div class="t " style="left:200px;top:158.30px;font-size:13px;line-height:17px;color:#111;width:114.8px;text-align:right;">180</div>
<div class="t " style="left:318px;top:158.30px;font-size:13px;line-height:17px;color:#111;width:114.8px;text-align:right;">8.0</div>
<div class="t " style="left:436px;top:158.30px;font-size:13px;line-height:17px;color:#111;width:114.8px;text-align:right;">6.8</div>
<div class="t " style="left:554px;top:158.30px;font-size:13px;line-height:17px;color:#111;width:114.8px;text-align:right;">.59</div>
<div class="t " style="left:674.2px;top:158.30px;font-size:13px;line-height:17px;color:#111;">apple</div>
<div class="t " style="left:736px;top:158.30px;font-size:13px;line-height:17px;color:#111;width:96.8px;text-align:right;">.00</div>
<div class="t " style="left:836px;top:158.30px;font-size:13px;line-height:17px;color:#111;width:96.8px;text-align:right;">1.00</div>
<div class="t " style="left:936px;top:158.30px;font-size:13px;line-height:17px;color:#111;width:96.8px;text-align:right;">.00</div>
<div class="rh" style="top:178px"></div>
<div class="t " style="left:0px;top:180.30px;font-size:13px;line-height:17px;color:#111;width:78px;text-align:center;">3</div>
<div class="t " style="left:82px;top:180.30px;font-size:13px;line-height:17px;color:#111;width:114.8px;text-align:right;">3</div>
<div class="t " style="left:200px;top:180.30px;font-size:13px;line-height:17px;color:#111;width:114.8px;text-align:right;">176</div>
<div class="t " style="left:318px;top:180.30px;font-size:13px;line-height:17px;color:#111;width:114.8px;text-align:right;">7.4</div>
<div class="t " style="left:436px;top:180.30px;font-size:13px;line-height:17px;color:#111;width:114.8px;text-align:right;">7.2</div>
<div class="t " style="left:554px;top:180.30px;font-size:13px;line-height:17px;color:#111;width:114.8px;text-align:right;">.60</div>
<div class="t " style="left:674.2px;top:180.30px;font-size:13px;line-height:17px;color:#111;">apple</div>
<div class="t " style="left:736px;top:180.30px;font-size:13px;line-height:17px;color:#111;width:96.8px;text-align:right;">.00</div>
<div class="t " style="left:836px;top:180.30px;font-size:13px;line-height:17px;color:#111;width:96.8px;text-align:right;">1.00</div>
<div class="t " style="left:936px;top:180.30px;font-size:13px;line-height:17px;color:#111;width:96.8px;text-align:right;">.00</div>
<div class="rh" style="top:200px"></div>
<div class="t " style="left:0px;top:202.30px;font-size:13px;line-height:17px;color:#111;width:78px;text-align:center;">4</div>
<div class="t " style="left:82px;top:202.30px;font-size:13px;line-height:17px;color:#111;width:114.8px;text-align:right;">4</div>
<div class="t " style="left:200px;top:202.30px;font-size:13px;line-height:17px;color:#111;width:114.8px;text-align:right;">178</div>
<div class="t " style="left:318px;top:202.30px;font-size:13px;line-height:17px;color:#111;width:114.8px;text-align:right;">7.1</div>
<div class="t " style="left:436px;top:202.30px;font-size:13px;line-height:17px;color:#111;width:114.8px;text-align:right;">7.8</div>
<div class="t " style="left:554px;top:202.30px;font-size:13px;line-height:17px;color:#111;width:114.8px;text-align:right;">.92</div>
<div class="t " style="left:674.2px;top:202.30px;font-size:13px;line-height:17px;color:#111;">apple</div>
<div class="t " style="left:736px;top:202.30px;font-size:13px;line-height:17px;color:#111;width:96.8px;text-align:right;">.00</div>
<div class="t " style="left:836px;top:202.30px;font-size:13px;line-height:17px;color:#111;width:96.8px;text-align:right;">1.00</div>
<div class="t " style="left:936px;top:202.30px;font-size:13px;line-height:17px;color:#111;width:96.8px;text-align:right;">.00</div>
<div class="rh" style="top:222px"></div>
<div class="t " style="left:0px;top:224.30px;font-size:13px;line-height:17px;color:#111;width:78px;text-align:center;">5</div>
<div class="t " style="left:82px;top:224.30px;font-size:13px;line-height:17px;color:#111;width:114.8px;text-align:right;">5</div>
<div class="t " style="left:200px;top:224.30px;font-size:13px;line-height:17px;color:#111;width:114.8px;text-align:right;">172</div>
<div class="t " style="left:318px;top:224.30px;font-size:13px;line-height:17px;color:#111;width:114.8px;text-align:right;">7.4</div>
<div class="t " style="left:436px;top:224.30px;font-size:13px;line-height:17px;color:#111;width:114.8px;text-align:right;">7.0</div>
<div class="t " style="left:554px;top:224.30px;font-size:13px;line-height:17px;color:#111;width:114.8px;text-align:right;">.89</div>
<div class="t " style="left:674.2px;top:224.30px;font-size:13px;line-height:17px;color:#111;">apple</div>
<div class="t " style="left:736px;top:224.30px;font-size:13px;line-height:17px;color:#111;width:96.8px;text-align:right;">.00</div>
<div class="t " style="left:836px;top:224.30px;font-size:13px;line-height:17px;color:#111;width:96.8px;text-align:right;">1.00</div>
<div class="t " style="left:936px;top:224.30px;font-size:13px;line-height:17px;color:#111;width:96.8px;text-align:right;">.00</div>
<div class="rh" style="top:244px"></div>
<div class="t " style="left:0px;top:246.30px;font-size:13px;line-height:17px;color:#111;width:78px;text-align:center;">6</div>
<div class="t " style="left:82px;top:246.30px;font-size:13px;line-height:17px;color:#111;width:114.8px;text-align:right;">6</div>
<div class="t " style="left:200px;top:246.30px;font-size:13px;line-height:17px;color:#111;width:114.8px;text-align:right;">166</div>
<div class="t " style="left:318px;top:246.30px;font-size:13px;line-height:17px;color:#111;width:114.8px;text-align:right;">6.9</div>
<div class="t " style="left:436px;top:246.30px;font-size:13px;line-height:17px;color:#111;width:114.8px;text-align:right;">7.3</div>
<div class="t " style="left:554px;top:246.30px;font-size:13px;line-height:17px;color:#111;width:114.8px;text-align:right;">.93</div>
<div class="t " style="left:674.2px;top:246.30px;font-size:13px;line-height:17px;color:#111;">apple</div>
<div class="t " style="left:736px;top:246.30px;font-size:13px;line-height:17px;color:#111;width:96.8px;text-align:right;">.00</div>
<div class="t " style="left:836px;top:246.30px;font-size:13px;line-height:17px;color:#111;width:96.8px;text-align:right;">1.00</div>
<div class="t " style="left:936px;top:246.30px;font-size:13px;line-height:17px;color:#111;width:96.8px;text-align:right;">.00</div>
<div class="rh" style="top:266px"></div>
<div class="t " style="left:0px;top:268.30px;font-size:13px;line-height:17px;color:#111;width:78px;text-align:center;">7</div>
<div class="t " style="left:82px;top:268.30px;font-size:13px;line-height:17px;color:#111;width:114.8px;text-align:right;">7</div>
<div class="t " style="left:200px;top:268.30px;font-size:13px;line-height:17px;color:#111;width:114.8px;text-align:right;">172</div>
<div class="t " style="left:318px;top:268.30px;font-size:13px;line-height:17px;color:#111;width:114.8px;text-align:right;">7.1</div>
<div class="t " style="left:436px;top:268.30px;font-size:13px;line-height:17px;color:#111;width:114.8px;text-align:right;">7.6</div>
<div class="t " style="left:554px;top:268.30px;font-size:13px;line-height:17px;color:#111;width:114.8px;text-align:right;">.92</div>
<div class="t " style="left:674.2px;top:268.30px;font-size:13px;line-height:17px;color:#111;">apple</div>
<div class="t " style="left:736px;top:268.30px;font-size:13px;line-height:17px;color:#111;width:96.8px;text-align:right;">.00</div>
<div class="t " style="left:836px;top:268.30px;font-size:13px;line-height:17px;color:#111;width:96.8px;text-align:right;">1.00</div>
<div class="t " style="left:936px;top:268.30px;font-size:13px;line-height:17px;color:#111;width:96.8px;text-align:right;">.00</div>
<div class="rh" style="top:288px"></div>
<div class="t " style="left:0px;top:290.30px;font-size:13px;line-height:17px;color:#111;width:78px;text-align:center;">8</div>
<div class="t " style="left:82px;top:290.30px;font-size:13px;line-height:17px;color:#111;width:114.8px;text-align:right;">8</div>
<div class="t " style="left:200px;top:290.30px;font-size:13px;line-height:17px;color:#111;width:114.8px;text-align:right;">154</div>
<div class="t " style="left:318px;top:290.30px;font-size:13px;line-height:17px;color:#111;width:114.8px;text-align:right;">7.0</div>
<div class="t " style="left:436px;top:290.30px;font-size:13px;line-height:17px;color:#111;width:114.8px;text-align:right;">7.1</div>
<div class="t " style="left:554px;top:290.30px;font-size:13px;line-height:17px;color:#111;width:114.8px;text-align:right;">.88</div>
<div class="t " style="left:674.2px;top:290.30px;font-size:13px;line-height:17px;color:#111;">apple</div>
<div class="t " style="left:736px;top:290.30px;font-size:13px;line-height:17px;color:#111;width:96.8px;text-align:right;">.00</div>
<div class="t " style="left:836px;top:290.30px;font-size:13px;line-height:17px;color:#111;width:96.8px;text-align:right;">1.00</div>
<div class="t " style="left:936px;top:290.30px;font-size:13px;line-height:17px;color:#111;width:96.8px;text-align:right;">.00</div>
<div class="rh" style="top:310px"></div>
<div class="t " style="left:0px;top:312.30px;font-size:13px;line-height:17px;color:#111;width:78px;text-align:center;">9</div>
<div class="t " style="left:82px;top:312.30px;font-size:13px;line-height:17px;color:#111;width:114.8px;text-align:right;">9</div>
<div class="t " style="left:200px;top:312.30px;font-size:13px;line-height:17px;color:#111;width:114.8px;text-align:right;">164</div>
<div class="t " style="left:318px;top:312.30px;font-size:13px;line-height:17px;color:#111;width:114.8px;text-align:right;">7.3</div>
<div class="t " style="left:436px;top:312.30px;font-size:13px;line-height:17px;color:#111;width:114.8px;text-align:right;">7.7</div>
<div class="t " style="left:554px;top:312.30px;font-size:13px;line-height:17px;color:#111;width:114.8px;text-align:right;">.70</div>
<div class="t " style="left:674.2px;top:312.30px;font-size:13px;line-height:17px;color:#111;">apple</div>
<div class="sel" style="left:737px;top:310px;width:97px;height:21px"></div>
<div class="t " style="left:736px;top:312.30px;font-size:13px;line-height:17px;color:#111;width:96.8px;text-align:right;">.00</div>
<div class="t " style="left:836px;top:312.30px;font-size:13px;line-height:17px;color:#111;width:96.8px;text-align:right;">1.00</div>
<div class="t " style="left:936px;top:312.30px;font-size:13px;line-height:17px;color:#111;width:96.8px;text-align:right;">.00</div>
<div class="rh" style="top:332px"></div>
<div class="t " style="left:0px;top:334.30px;font-size:13px;line-height:17px;color:#111;width:78px;text-align:center;">10</div>
<div class="t " style="left:82px;top:334.30px;font-size:13px;line-height:17px;color:#111;width:114.8px;text-align:right;">10</div>
<div class="t " style="left:200px;top:334.30px;font-size:13px;line-height:17px;color:#111;width:114.8px;text-align:right;">152</div>
<div class="t " style="left:318px;top:334.30px;font-size:13px;line-height:17px;color:#111;width:114.8px;text-align:right;">7.6</div>
<div class="t " style="left:436px;top:334.30px;font-size:13px;line-height:17px;color:#111;width:114.8px;text-align:right;">7.3</div>
<div class="t " style="left:554px;top:334.30px;font-size:13px;line-height:17px;color:#111;width:114.8px;text-align:right;">.69</div>
<div class="t " style="left:674.2px;top:334.30px;font-size:13px;line-height:17px;color:#111;">apple</div>
<div class="t " style="left:736px;top:334.30px;font-size:13px;line-height:17px;color:#111;width:96.8px;text-align:right;">.00</div>
<div class="t " style="left:836px;top:334.30px;font-size:13px;line-height:17px;color:#111;width:96.8px;text-align:right;">1.00</div>
<div class="t " style="left:936px;top:334.30px;font-size:13px;line-height:17px;color:#111;width:96.8px;text-align:right;">.00</div>
<div class="rh" style="top:354px"></div>
<div class="t " style="left:0px;top:356.30px;font-size:13px;line-height:17px;color:#111;width:78px;text-align:center;">11</div>
<div class="t " style="left:82px;top:356.30px;font-size:13px;line-height:17px;color:#111;width:114.8px;text-align:right;">11</div>
<div class="t " style="left:200px;top:356.30px;font-size:13px;line-height:17px;color:#111;width:114.8px;text-align:right;">156</div>
<div class="t " style="left:318px;top:356.30px;font-size:13px;line-height:17px;color:#111;width:114.8px;text-align:right;">7.7</div>
<div class="t " style="left:436px;top:356.30px;font-size:13px;line-height:17px;color:#111;width:114.8px;text-align:right;">7.1</div>
<div class="t " style="left:554px;top:356.30px;font-size:13px;line-height:17px;color:#111;width:114.8px;text-align:right;">.69</div>
<div class="t " style="left:674.2px;top:356.30px;font-size:13px;line-height:17px;color:#111;">apple</div>
<div class="t " style="left:736px;top:356.30px;font-size:13px;line-height:17px;color:#111;width:96.8px;text-align:right;">.00</div>
<div class="t " style="left:836px;top:356.30px;font-size:13px;line-height:17px;color:#111;width:96.8px;text-align:right;">1.00</div>
<div class="t " style="left:936px;top:356.30px;font-size:13px;line-height:17px;color:#111;width:96.8px;text-align:right;">.00</div>
<div class="rh" style="top:376px"></div>
<div class="t " style="left:0px;top:378.30px;font-size:13px;line-height:17px;color:#111;width:78px;text-align:center;">12</div>
<div class="t " style="left:82px;top:378.30px;font-size:13px;line-height:17px;color:#111;width:114.8px;text-align:right;">12</div>
<div class="t " style="left:200px;top:378.30px;font-size:13px;line-height:17px;color:#111;width:114.8px;text-align:right;">156</div>
<div class="t " style="left:318px;top:378.30px;font-size:13px;line-height:17px;color:#111;width:114.8px;text-align:right;">7.6</div>
<div class="t " style="left:436px;top:378.30px;font-size:13px;line-height:17px;color:#111;width:114.8px;text-align:right;">7.5</div>
<div class="t " style="left:554px;top:378.30px;font-size:13px;line-height:17px;color:#111;width:114.8px;text-align:right;">.67</div>
<div class="t " style="left:674.2px;top:378.30px;font-size:13px;line-height:17px;color:#111;">apple</div>
<div class="t " style="left:736px;top:378.30px;font-size:13px;line-height:17px;color:#111;width:96.8px;text-align:right;">.00</div>
<div class="t " style="left:836px;top:378.30px;font-size:13px;line-height:17px;color:#111;width:96.8px;text-align:right;">1.00</div>
<div class="t " style="left:936px;top:378.30px;font-size:13px;line-height:17px;color:#111;width:96.8px;text-align:right;">.00</div>
<div class="rh" style="top:398px"></div>
<div class="t " style="left:0px;top:400.30px;font-size:13px;line-height:17px;color:#111;width:78px;text-align:center;">13</div>
<div class="t " style="left:82px;top:400.30px;font-size:13px;line-height:17px;color:#111;width:114.8px;text-align:right;">13</div>
<div class="t " style="left:200px;top:400.30px;font-size:13px;line-height:17px;color:#111;width:114.8px;text-align:right;">168</div>
<div class="t " style="left:318px;top:400.30px;font-size:13px;line-height:17px;color:#111;width:114.8px;text-align:right;">7.5</div>
<div class="t " style="left:436px;top:400.30px;font-size:13px;line-height:17px;color:#111;width:114.8px;text-align:right;">7.6</div>
<div class="t " style="left:554px;top:400.30px;font-size:13px;line-height:17px;color:#111;width:114.8px;text-align:right;">.73</div>
<div class="t " style="left:674.2px;top:400.30px;font-size:13px;line-height:17px;color:#111;">apple</div>
<div class="t " style="left:736px;top:400.30px;font-size:13px;line-height:17px;color:#111;width:96.8px;text-align:right;">.00</div>
<div class="t " style="left:836px;top:400.30px;font-size:13px;line-height:17px;color:#111;width:96.8px;text-align:right;">1.00</div>
<div class="t " style="left:936px;top:400.30px;font-size:13px;line-height:17px;color:#111;width:96.8px;text-align:right;">.00</div>
<div class="rh" style="top:420px"></div>
<div class="t " style="left:0px;top:422.30px;font-size:13px;line-height:17px;color:#111;width:78px;text-align:center;">14</div>
<div class="t " style="left:82px;top:422.30px;font-size:13px;line-height:17px;color:#111;width:114.8px;text-align:right;">14</div>
<div class="t " style="left:200px;top:422.30px;font-size:13px;line-height:17px;color:#111;width:114.8px;text-align:right;">162</div>
<div class="t " style="left:318px;top:422.30px;font-size:13px;line-height:17px;color:#111;width:114.8px;text-align:right;">7.5</div>
<div class="t " style="left:436px;top:422.30px;font-size:13px;line-height:17px;color:#111;width:114.8px;text-align:right;">7.1</div>
<div class="t " style="left:554px;top:422.30px;font-size:13px;line-height:17px;color:#111;width:114.8px;text-align:right;">.83</div>
<div class="t " style="left:674.2px;top:422.30px;font-size:13px;line-height:17px;color:#111;">apple</div>
<div class="t " style="left:736px;top:422.30px;font-size:13px;line-height:17px;color:#111;width:96.8px;text-align:right;">.00</div>
<div class="t " style="left:836px;top:422.30px;font-size:13px;line-height:17px;color:#111;width:96.8px;text-align:right;">1.00</div>
<div class="t " style="left:936px;top:422.30px;font-size:13px;line-height:17px;color:#111;width:96.8px;text-align:right;">.00</div>
<div class="rh" style="top:442px"></div>
<div class="t " style="left:0px;top:444.30px;font-size:13px;line-height:17px;color:#111;width:78px;text-align:center;">15</div>
<div class="t " style="left:82px;top:444.30px;font-size:13px;line-height:17px;color:#111;width:114.8px;text-align:right;">15</div>
<div class="t " style="left:200px;top:444.30px;font-size:13px;line-height:17px;color:#111;width:114.8px;text-align:right;">162</div>
<div class="t " style="left:318px;top:444.30px;font-size:13px;line-height:17px;color:#111;width:114.8px;text-align:right;">7.4</div>
<div class="t " style="left:436px;top:444.30px;font-size:13px;line-height:17px;color:#111;width:114.8px;text-align:right;">7.2</div>
<div class="t " style="left:554px;top:444.30px;font-size:13px;line-height:17px;color:#111;width:114.8px;text-align:right;">.85</div>
<div class="t " style="left:674.2px;top:444.30px;font-size:13px;line-height:17px;color:#111;">apple</div>
<div class="t " style="left:736px;top:444.30px;font-size:13px;line-height:17px;color:#111;width:96.8px;text-align:right;">.00</div>
<div class="t " style="left:836px;top:444.30px;font-size:13px;line-height:17px;color:#111;width:96.8px;text-align:right;">1.00</div>
<div class="t " style="left:936px;top:444.30px;font-size:13px;line-height:17px;color:#111;width:96.8px;text-align:right;">.00</div>
<div class="rh" style="top:464px"></div>
<div class="t " style="left:0px;top:466.30px;font-size:13px;line-height:17px;color:#111;width:78px;text-align:center;">16</div>
<div class="t " style="left:82px;top:466.30px;font-size:13px;line-height:17px;color:#111;width:114.8px;text-align:right;">16</div>
<div class="t " style="left:200px;top:466.30px;font-size:13px;line-height:17px;color:#111;width:114.8px;text-align:right;">160</div>
<div class="t " style="left:318px;top:466.30px;font-size:13px;line-height:17px;color:#111;width:114.8px;text-align:right;">7.5</div>
<div class="t " style="left:436px;top:466.30px;font-size:13px;line-height:17px;color:#111;width:114.8px;text-align:right;">7.5</div>
<div class="t " style="left:554px;top:466.30px;font-size:13px;line-height:17px;color:#111;width:114.8px;text-align:right;">.86</div>
<div class="t " style="left:674.2px;top:466.30px;font-size:13px;line-height:17px;color:#111;">apple</div>
<div class="t " style="left:736px;top:466.30px;font-size:13px;line-height:17px;color:#111;width:96.8px;text-align:right;">.00</div>
<div class="t " style="left:836px;top:466.30px;font-size:13px;line-height:17px;color:#111;width:96.8px;text-align:right;">1.00</div>
<div class="t " style="left:936px;top:466.30px;font-size:13px;line-height:17px;color:#111;width:96.8px;text-align:right;">.00</div>
<div class="rh" style="top:486px"></div>
<div class="t " style="left:0px;top:488.30px;font-size:13px;line-height:17px;color:#111;width:78px;text-align:center;">17</div>
<div class="t " style="left:82px;top:488.30px;font-size:13px;line-height:17px;color:#111;width:114.8px;text-align:right;">17</div>
<div class="t " style="left:200px;top:488.30px;font-size:13px;line-height:17px;color:#111;width:114.8px;text-align:right;">156</div>
<div class="t " style="left:318px;top:488.30px;font-size:13px;line-height:17px;color:#111;width:114.8px;text-align:right;">7.4</div>
<div class="t " style="left:436px;top:488.30px;font-size:13px;line-height:17px;color:#111;width:114.8px;text-align:right;">7.4</div>
<div class="t " style="left:554px;top:488.30px;font-size:13px;line-height:17px;color:#111;width:114.8px;text-align:right;">.84</div>
<div class="t " style="left:674.2px;top:488.30px;font-size:13px;line-height:17px;color:#111;">apple</div>
<div class="t " style="left:736px;top:488.30px;font-size:13px;line-height:17px;color:#111;width:96.8px;text-align:right;">.00</div>
<div class="t " style="left:836px;top:488.30px;font-size:13px;line-height:17px;color:#111;width:96.8px;text-align:right;">1.00</div>
<div class="t " style="left:936px;top:488.30px;font-size:13px;line-height:17px;color:#111;width:96.8px;text-align:right;">.00</div>
<div class="rh" style="top:508px"></div>
<div class="t " style="left:0px;top:510.30px;font-size:13px;line-height:17px;color:#111;width:78px;text-align:center;">18</div>
<div class="t " style="left:82px;top:510.30px;font-size:13px;line-height:17px;color:#111;width:114.8px;text-align:right;">18</div>
<div class="t " style="left:200px;top:510.30px;font-size:13px;line-height:17px;color:#111;width:114.8px;text-align:right;">140</div>
<div class="t " style="left:318px;top:510.30px;font-size:13px;line-height:17px;color:#111;width:114.8px;text-align:right;">7.3</div>
<div class="t " style="left:436px;top:510.30px;font-size:13px;line-height:17px;color:#111;width:114.8px;text-align:right;">7.1</div>
<div class="t " style="left:554px;top:510.30px;font-size:13px;line-height:17px;color:#111;width:114.8px;text-align:right;">.87</div>
<div class="t " style="left:674.2px;top:510.30px;font-size:13px;line-height:17px;color:#111;">apple</div>
<div class="t " style="left:736px;top:510.30px;font-size:13px;line-height:17px;color:#111;width:96.8px;text-align:right;">.00</div>
<div class="t " style="left:836px;top:510.30px;font-size:13px;line-height:17px;color:#111;width:96.8px;text-align:right;">1.00</div>
<div class="t " style="left:936px;top:510.30px;font-size:13px;line-height:17px;color:#111;width:96.8px;text-align:right;">.00</div>
<div class="rh" style="top:530px"></div>
<div class="t " style="left:0px;top:532.30px;font-size:13px;line-height:17px;color:#111;width:78px;text-align:center;">19</div>
<div class="t " style="left:82px;top:532.30px;font-size:13px;line-height:17px;color:#111;width:114.8px;text-align:right;">19</div>
<div class="t " style="left:200px;top:532.30px;font-size:13px;line-height:17px;color:#111;width:114.8px;text-align:right;">170</div>
<div class="t " style="left:318px;top:532.30px;font-size:13px;line-height:17px;color:#111;width:114.8px;text-align:right;">7.6</div>
<div class="t " style="left:436px;top:532.30px;font-size:13px;line-height:17px;color:#111;width:114.8px;text-align:right;">7.9</div>
<div class="t " style="left:554px;top:532.30px;font-size:13px;line-height:17px;color:#111;width:114.8px;text-align:right;">.88</div>
<div class="t " style="left:674.2px;top:532.30px;font-size:13px;line-height:17px;color:#111;">apple</div>
<div class="t " style="left:736px;top:532.30px;font-size:13px;line-height:17px;color:#111;width:96.8px;text-align:right;">.00</div>
<div class="t " style="left:836px;top:532.30px;font-size:13px;line-height:17px;color:#111;width:96.8px;text-align:right;">1.00</div>
<div class="t " style="left:936px;top:532.30px;font-size:13px;line-height:17px;color:#111;width:96.8px;text-align:right;">.00</div>
<div class="rh" style="top:552px"></div>
<div class="t " style="left:0px;top:554.30px;font-size:13px;line-height:17px;color:#111;width:78px;text-align:center;">20</div>
<div class="t " style="left:82px;top:554.30px;font-size:13px;line-height:17px;color:#111;width:114.8px;text-align:right;">20</div>
<div class="t " style="left:200px;top:554.30px;font-size:13px;line-height:17px;color:#111;width:114.8px;text-align:right;">342</div>
<div class="t " style="left:318px;top:554.30px;font-size:13px;line-height:17px;color:#111;width:114.8px;text-align:right;">9.0</div>
<div class="t " style="left:436px;top:554.30px;font-size:13px;line-height:17px;color:#111;width:114.8px;text-align:right;">9.4</div>
<div class="t " style="left:554px;top:554.30px;font-size:13px;line-height:17px;color:#111;width:114.8px;text-align:right;">.75</div>
<div class="t " style="left:674.2px;top:554.30px;font-size:13px;line-height:17px;color:#111;">orange</div>
<div class="t " style="left:736px;top:554.30px;font-size:13px;line-height:17px;color:#111;width:96.8px;text-align:right;">.00</div>
<div class="t " style="left:836px;top:554.30px;font-size:13px;line-height:17px;color:#111;width:96.8px;text-align:right;">.00</div>
<div class="t " style="left:936px;top:554.30px;font-size:13px;line-height:17px;color:#111;width:96.8px;text-align:right;">1.00</div>
<div class="rh" style="top:574px"></div>
<div class="t " style="left:0px;top:576.30px;font-size:13px;line-height:17px;color:#111;width:78px;text-align:center;">21</div>
<div class="t " style="left:82px;top:576.30px;font-size:13px;line-height:17px;color:#111;width:114.8px;text-align:right;">21</div>
<div class="t " style="left:200px;top:576.30px;font-size:13px;line-height:17px;color:#111;width:114.8px;text-align:right;">356</div>
<div class="t " style="left:318px;top:576.30px;font-size:13px;line-height:17px;color:#111;width:114.8px;text-align:right;">9.2</div>
<div class="t " style="left:436px;top:576.30px;font-size:13px;line-height:17px;color:#111;width:114.8px;text-align:right;">9.2</div>
<div class="t " style="left:554px;top:576.30px;font-size:13px;line-height:17px;color:#111;width:114.8px;text-align:right;">.75</div>
<div class="t " style="left:674.2px;top:576.30px;font-size:13px;line-height:17px;color:#111;">orange</div>
<div class="t " style="left:736px;top:576.30px;font-size:13px;line-height:17px;color:#111;width:96.8px;text-align:right;">.00</div>
<div class="t " style="left:836px;top:576.30px;font-size:13px;line-height:17px;color:#111;width:96.8px;text-align:right;">.00</div>
<div class="t " style="left:936px;top:576.30px;font-size:13px;line-height:17px;color:#111;width:96.8px;text-align:right;">1.00</div>
<div class="rh" style="top:596px"></div>
<div class="t " style="left:0px;top:598.30px;font-size:13px;line-height:17px;color:#111;width:78px;text-align:center;">22</div>
<div class="t " style="left:82px;top:598.30px;font-size:13px;line-height:17px;color:#111;width:114.8px;text-align:right;">22</div>
<div class="t " style="left:200px;top:598.30px;font-size:13px;line-height:17px;color:#111;width:114.8px;text-align:right;">362</div>
<div class="t " style="left:318px;top:598.30px;font-size:13px;line-height:17px;color:#111;width:114.8px;text-align:right;">9.6</div>
<div class="t " style="left:436px;top:598.30px;font-size:13px;line-height:17px;color:#111;width:114.8px;text-align:right;">9.2</div>
<div class="t " style="left:554px;top:598.30px;font-size:13px;line-height:17px;color:#111;width:114.8px;text-align:right;">.74</div>
<div class="t " style="left:674.2px;top:598.30px;font-size:13px;line-height:17px;color:#111;">orange</div>
<div class="t " style="left:736px;top:598.30px;font-size:13px;line-height:17px;color:#111;width:96.8px;text-align:right;">.00</div>
<div class="t " style="left:836px;top:598.30px;font-size:13px;line-height:17px;color:#111;width:96.8px;text-align:right;">.00</div>
<div class="t " style="left:936px;top:598.30px;font-size:13px;line-height:17px;color:#111;width:96.8px;text-align:right;">1.00</div>
<div class="rh" style="top:618px"></div>
<div class="t " style="left:0px;top:620.30px;font-size:13px;line-height:17px;color:#111;width:78px;text-align:center;">23</div>
<div class="t " style="left:82px;top:620.30px;font-size:13px;line-height:17px;color:#111;width:114.8px;text-align:right;">23</div>
<div class="t " style="left:200px;top:620.30px;font-size:13px;line-height:17px;color:#111;width:114.8px;text-align:right;">204</div>
<div class="t " style="left:318px;top:620.30px;font-size:13px;line-height:17px;color:#111;width:114.8px;text-align:right;">7.5</div>
<div class="t " style="left:436px;top:620.30px;font-size:13px;line-height:17px;color:#111;width:114.8px;text-align:right;">9.2</div>
<div class="t " style="left:554px;top:620.30px;font-size:13px;line-height:17px;color:#111;width:114.8px;text-align:right;">.77</div>
<div class="t " style="left:674.2px;top:620.30px;font-size:13px;line-height:17px;color:#111;">orange</div>
<div class="t " style="left:736px;top:620.30px;font-size:13px;line-height:17px;color:#111;width:96.8px;text-align:right;">.00</div>
<div class="t " style="left:836px;top:620.30px;font-size:13px;line-height:17px;color:#111;width:96.8px;text-align:right;">.00</div>
<div class="t " style="left:936px;top:620.30px;font-size:13px;line-height:17px;color:#111;width:96.8px;text-align:right;">1.00</div>
<div class="rh" style="top:640px"></div>
<div class="t " style="left:0px;top:642.30px;font-size:13px;line-height:17px;color:#111;width:78px;text-align:center;">24</div>
<div class="t " style="left:82px;top:642.30px;font-size:13px;line-height:17px;color:#111;width:114.8px;text-align:right;">24</div>
<div class="t " style="left:200px;top:642.30px;font-size:13px;line-height:17px;color:#111;width:114.8px;text-align:right;">140</div>
<div class="t " style="left:318px;top:642.30px;font-size:13px;line-height:17px;color:#111;width:114.8px;text-align:right;">6.7</div>
<div class="t " style="left:436px;top:642.30px;font-size:13px;line-height:17px;color:#111;width:114.8px;text-align:right;">7.1</div>
<div class="t " style="left:554px;top:642.30px;font-size:13px;line-height:17px;color:#111;width:114.8px;text-align:right;">.72</div>
<div class="t " style="left:674.2px;top:642.30px;font-size:13px;line-height:17px;color:#111;">orange</div>
<div class="t " style="left:736px;top:642.30px;font-size:13px;line-height:17px;color:#111;width:96.8px;text-align:right;">.00</div>
<div class="t " style="left:836px;top:642.30px;font-size:13px;line-height:17px;color:#111;width:96.8px;text-align:right;">.00</div>
<div class="t " style="left:936px;top:642.30px;font-size:13px;line-height:17px;color:#111;width:96.8px;text-align:right;">1.00</div>
<div class="rh" style="top:662px"></div>
<div class="t " style="left:0px;top:664.30px;font-size:13px;line-height:17px;color:#111;width:78px;text-align:center;">25</div>
<div class="t " style="left:82px;top:664.30px;font-size:13px;line-height:17px;color:#111;width:114.8px;text-align:right;">25</div>
<div class="t " style="left:200px;top:664.30px;font-size:13px;line-height:17px;color:#111;width:114.8px;text-align:right;">160</div>
<div class="t " style="left:318px;top:664.30px;font-size:13px;line-height:17px;color:#111;width:114.8px;text-align:right;">7.0</div>
<div class="t " style="left:436px;top:664.30px;font-size:13px;line-height:17px;color:#111;width:114.8px;text-align:right;">7.4</div>
<div class="t " style="left:554px;top:664.30px;font-size:13px;line-height:17px;color:#111;width:114.8px;text-align:right;">.81</div>
<div class="t " style="left:674.2px;top:664.30px;font-size:13px;line-height:17px;color:#111;">orange</div>
<div class="t " style="left:736px;top:664.30px;font-size:13px;line-height:17px;color:#111;width:96.8px;text-align:right;">.00</div>
<div class="t " style="left:836px;top:664.30px;font-size:13px;line-height:17px;color:#111;width:96.8px;text-align:right;">.00</div>
<div class="t " style="left:936px;top:664.30px;font-size:13px;line-height:17px;color:#111;width:96.8px;text-align:right;">1.00</div>
<div class="rh" style="top:684px"></div>
<div class="t " style="left:0px;top:686.30px;font-size:13px;line-height:17px;color:#111;width:78px;text-align:center;">26</div>
<div class="t " style="left:82px;top:686.30px;font-size:13px;line-height:17px;color:#111;width:114.8px;text-align:right;">26</div>
<div class="t " style="left:200px;top:686.30px;font-size:13px;line-height:17px;color:#111;width:114.8px;text-align:right;">158</div>
<div class="t " style="left:318px;top:686.30px;font-size:13px;line-height:17px;color:#111;width:114.8px;text-align:right;">7.1</div>
<div class="t " style="left:436px;top:686.30px;font-size:13px;line-height:17px;color:#111;width:114.8px;text-align:right;">7.5</div>
<div class="t " style="left:554px;top:686.30px;font-size:13px;line-height:17px;color:#111;width:114.8px;text-align:right;">.79</div>
<div class="t " style="left:674.2px;top:686.30px;font-size:13px;line-height:17px;color:#111;">orange</div>
<div class="t " style="left:736px;top:686.30px;font-size:13px;line-height:17px;color:#111;width:96.8px;text-align:right;">.00</div>
<div class="t " style="left:836px;top:686.30px;font-size:13px;line-height:17px;color:#111;width:96.8px;text-align:right;">.00</div>
<div class="t " style="left:936px;top:686.30px;font-size:13px;line-height:17px;color:#111;width:96.8px;text-align:right;">1.00</div>
<div class="rh" style="top:706px"></div>
<div class="t " style="left:0px;top:708.30px;font-size:13px;line-height:17px;color:#111;width:78px;text-align:center;">27</div>
<div class="t " style="left:82px;top:708.30px;font-size:13px;line-height:17px;color:#111;width:114.8px;text-align:right;">27</div>
<div class="t " style="left:200px;top:708.30px;font-size:13px;line-height:17px;color:#111;width:114.8px;text-align:right;">210</div>
<div class="t " style="left:318px;top:708.30px;font-size:13px;line-height:17px;color:#111;width:114.8px;text-align:right;">7.8</div>
<div class="t " style="left:436px;top:708.30px;font-size:13px;line-height:17px;color:#111;width:114.8px;text-align:right;">8.0</div>
<div class="t " style="left:554px;top:708.30px;font-size:13px;line-height:17px;color:#111;width:114.8px;text-align:right;">.82</div>
<div class="t " style="left:674.2px;top:708.30px;font-size:13px;line-height:17px;color:#111;">orange</div>
<div class="t " style="left:736px;top:708.30px;font-size:13px;line-height:17px;color:#111;width:96.8px;text-align:right;">.00</div>
<div class="t " style="left:836px;top:708.30px;font-size:13px;line-height:17px;color:#111;width:96.8px;text-align:right;">.00</div>
<div class="t " style="left:936px;top:708.30px;font-size:13px;line-height:17px;color:#111;width:96.8px;text-align:right;">1.00</div>
<div class="rh" style="top:728px"></div>
<div class="t " style="left:0px;top:730.30px;font-size:13px;line-height:17px;color:#111;width:78px;text-align:center;">28</div>
<div class="t " style="left:82px;top:730.30px;font-size:13px;line-height:17px;color:#111;width:114.8px;text-align:right;">28</div>
<div class="t " style="left:200px;top:730.30px;font-size:13px;line-height:17px;color:#111;width:114.8px;text-align:right;">164</div>
<div class="t " style="left:318px;top:730.30px;font-size:13px;line-height:17px;color:#111;width:114.8px;text-align:right;">7.2</div>
<div class="t " style="left:436px;top:730.30px;font-size:13px;line-height:17px;color:#111;width:114.8px;text-align:right;">7.0</div>
<div class="t " style="left:554px;top:730.30px;font-size:13px;line-height:17px;color:#111;width:114.8px;text-align:right;">.80</div>
<div class="t " style="left:674.2px;top:730.30px;font-size:13px;line-height:17px;color:#111;">orange</div>
<div class="t " style="left:736px;top:730.30px;font-size:13px;line-height:17px;color:#111;width:96.8px;text-align:right;">.00</div>
<div class="t " style="left:836px;top:730.30px;font-size:13px;line-height:17px;color:#111;width:96.8px;text-align:right;">.00</div>
<div class="t " style="left:936px;top:730.30px;font-size:13px;line-height:17px;color:#111;width:96.8px;text-align:right;">1.00</div>
<div class="rh" style="top:750px"></div>
<div class="t " style="left:0px;top:752.30px;font-size:13px;line-height:17px;color:#111;width:78px;text-align:center;">29</div>
<div class="t " style="left:82px;top:752.30px;font-size:13px;line-height:17px;color:#111;width:114.8px;text-align:right;">29</div>
<div class="t " style="left:200px;top:752.30px;font-size:13px;line-height:17px;color:#111;width:114.8px;text-align:right;">190</div>
<div class="t " style="left:318px;top:752.30px;font-size:13px;line-height:17px;color:#111;width:114.8px;text-align:right;">7.5</div>
<div class="t " style="left:436px;top:752.30px;font-size:13px;line-height:17px;color:#111;width:114.8px;text-align:right;">8.1</div>
<div class="t " style="left:554px;top:752.30px;font-size:13px;line-height:17px;color:#111;width:114.8px;text-align:right;">.74</div>
<div class="t " style="left:674.2px;top:752.30px;font-size:13px;line-height:17px;color:#111;">orange</div>
<div class="t " style="left:736px;top:752.30px;font-size:13px;line-height:17px;color:#111;width:96.8px;text-align:right;">.00</div>
<div class="t " style="left:836px;top:752.30px;font-size:13px;line-height:17px;color:#111;width:96.8px;text-align:right;">.00</div>
<div class="t " style="left:936px;top:752.30px;font-size:13px;line-height:17px;color:#111;width:96.8px;text-align:right;">1.00</div>
</div>
<div id="vsb"><div class="vtrack"></div><div class="vthumb"></div><div class="sbtn" style="left:0;top:0"><svg width="14" height="14" viewBox="0 0 14 14" style="left:0;top:0"><path d="M2.3 9.6 L7 4.4 L11.7 9.6 Z" fill="url(#ag)"/></svg></div><div class="sbtn" style="left:0;top:610px"><svg width="14" height="14" viewBox="0 0 14 14" style="left:0;top:0"><path d="M2.3 4.6 L7 9.8 L11.7 4.6 Z" fill="url(#ag)"/></svg></div></div>
<div id="gridbot"></div><div id="gridright"></div>
<div id="hsb"><div class="htrack"></div><div class="hthumb"></div><div class="sbtn" style="left:0;top:0"><svg width="14" height="14" viewBox="0 0 14 14" style="left:0;top:0"><path d="M9.6 2.6 L4.4 7 L9.6 11.4 Z" fill="url(#ag)"/></svg></div><div class="sbtn" style="left:1418px;top:0"><svg width="14" height="14" viewBox="0 0 14 14" style="left:0;top:0"><path d="M4.6 2.6 L9.8 7 L4.6 11.4 Z" fill="url(#ag)"/></svg></div></div>
<div id="divider"></div><div id="hsbsh"></div>
<div class="dot" style="left:761.7px;top:777.8px"></div>
<div class="dot" style="left:766.8px;top:777.8px"></div>
<div class="dot" style="left:771.8px;top:777.8px"></div>
<div id="tabpanel"></div>
<div id="tab1"></div>
<div class="t " style="left:9.4px;top:792.14px;font-size:12px;line-height:16px;color:#000;font-weight:bold;"><span class="c" style="letter-spacing:-0.2px;font-weight:700">数据视图</span></div>
<div id="tab2"></div>
<div class="t " style="left:71.6px;top:790.64px;font-size:12px;line-height:16px;color:#000;"><span class="c">变量视图</span></div>
<div id="status"></div>
<div class="sunk sb" style="left:7px;top:821px;width:1103px;height:14px"></div>
<div class="sunk sb" style="left:1112px;top:821px;width:195px;height:14px"></div>
<div class="sunk sb" style="left:1309px;top:821px;width:17px;height:14px"></div>
<div class="sunk sb" style="left:1328px;top:821px;width:29px;height:14px"></div>
<div class="sunk sb" style="left:1359px;top:821px;width:78px;height:14px"></div>
<div class="sunk sb" style="left:1439px;top:821px;width:29px;height:14px"></div>
<div class="sunk sb" style="left:1470px;top:821px;width:29px;height:14px"></div>
<div class="sunk sb" style="left:1501px;top:821px;width:29px;height:14px"></div>
<div class="t " style="left:1115.2px;top:823.04px;font-size:12px;line-height:16px;color:#000;">IBM SPSS Statistics <span class="c">处理程序就绪</span></div>
<div class="t " style="left:1361.5px;top:823.04px;font-size:12px;line-height:16px;color:#000;">Unicode:ON</div>
<svg width="0" height="0" style="left:0;top:0"><defs><linearGradient id="ag" x1="0" y1="0" x2="1" y2="1"><stop offset="0" stop-color="#3a3a3a"/><stop offset="1" stop-color="#9a9a9a"/></linearGradient>
<linearGradient id="gFoldF" x1="0" y1="0" x2="0.25" y2="1"><stop offset="0" stop-color="#ff8c0c"/><stop offset="0.45" stop-color="#ffae30"/><stop offset="1" stop-color="#fff27a"/></linearGradient>
<linearGradient id="gFoldB" x1="0" y1="0" x2="0" y2="1"><stop offset="0" stop-color="#ffe27a"/><stop offset="0.35" stop-color="#ffc428"/><stop offset="1" stop-color="#f29a18"/></linearGradient>
<linearGradient id="gFlop" x1="0" y1="0" x2="1" y2="1"><stop offset="0" stop-color="#6aa0d2"/><stop offset="1" stop-color="#4479b2"/></linearGradient>
<linearGradient id="gMetal" x1="0" y1="0" x2="1" y2="1"><stop offset="0" stop-color="#ffffff"/><stop offset="1" stop-color="#c8c8cc"/></linearGradient>
<linearGradient id="gPaperB" x1="0" y1="0" x2="0" y2="1"><stop offset="0" stop-color="#7fc0f6"/><stop offset="1" stop-color="#eaf5ff"/></linearGradient>
<linearGradient id="gPrTop" x1="0" y1="0" x2="0" y2="1"><stop offset="0" stop-color="#f4f4f4"/><stop offset="1" stop-color="#c4c4c4"/></linearGradient>
<linearGradient id="gPrBot" x1="0" y1="0" x2="1" y2="0"><stop offset="0" stop-color="#8a8a8a"/><stop offset="0.15" stop-color="#d8d8d8"/><stop offset="0.85" stop-color="#d0d0d0"/><stop offset="1" stop-color="#808080"/></linearGradient>
<linearGradient id="gTitle" x1="0" y1="0" x2="1" y2="1"><stop offset="0" stop-color="#5aa6f0"/><stop offset="1" stop-color="#0f55c6"/></linearGradient>
<linearGradient id="gPanel" x1="0" y1="0" x2="0" y2="1"><stop offset="0" stop-color="#b8e4f8"/><stop offset="1" stop-color="#86c4ea"/></linearGradient>
<linearGradient id="gGreen" x1="0" y1="0" x2="0" y2="1"><stop offset="0" stop-color="#8cee5c"/><stop offset="1" stop-color="#3ac022"/></linearGradient>
<linearGradient id="gBlueArr" x1="0" y1="0" x2="1" y2="1"><stop offset="0" stop-color="#1f5fd0"/><stop offset="1" stop-color="#6ab0f4"/></linearGradient>
<linearGradient id="gRed" x1="0" y1="0" x2="1" y2="0"><stop offset="0" stop-color="#b01c0e"/><stop offset="0.45" stop-color="#e43626"/><stop offset="1" stop-color="#8e1006"/></linearGradient>
<linearGradient id="gHdr" x1="0" y1="0" x2="0" y2="1"><stop offset="0" stop-color="#3d66d8"/><stop offset="1" stop-color="#9db8f4"/></linearGradient>
<linearGradient id="gBino" x1="0" y1="0" x2="1" y2="0"><stop offset="0" stop-color="#6a7684"/><stop offset="0.35" stop-color="#e4ebf2"/><stop offset="0.6" stop-color="#9aa6b4"/><stop offset="1" stop-color="#5a6674"/></linearGradient>
<linearGradient id="gBinoB" x1="0" y1="0" x2="0" y2="1"><stop offset="0" stop-color="#050505"/><stop offset="0.55" stop-color="#3a3a3a"/><stop offset="1" stop-color="#8a8a8a"/></linearGradient>
<linearGradient id="gLbl" x1="0" y1="0" x2="1" y2="1"><stop offset="0" stop-color="#ffffff"/><stop offset="0.6" stop-color="#f4f6fc"/><stop offset="1" stop-color="#c4d0ee"/></linearGradient>
<linearGradient id="gC1" x1="0" y1="0" x2="1" y2="1"><stop offset="0" stop-color="#ffffff"/><stop offset="1" stop-color="#d4dcf4"/></linearGradient>
<linearGradient id="gC2" x1="0" y1="0" x2="1" y2="1"><stop offset="0" stop-color="#c8dcfa"/><stop offset="1" stop-color="#4f83e6"/></linearGradient>
<linearGradient id="gBoxT" x1="0" y1="0" x2="0" y2="1"><stop offset="0" stop-color="#eef4fd"/><stop offset="1" stop-color="#a9c8e8"/></linearGradient>
<radialGradient id="gLime" cx="0.5" cy="0.5" r="0.5"><stop offset="0" stop-color="#b6d41e"/><stop offset="0.78" stop-color="#a8cc18"/><stop offset="0.86" stop-color="#c8e050"/><stop offset="1" stop-color="#94bc14"/></radialGradient>
<linearGradient id="gPurp" x1="0" y1="0" x2="1" y2="0"><stop offset="0" stop-color="#d070d4"/><stop offset="1" stop-color="#a848b4"/></linearGradient>

<radialGradient id="bB" cx="0.4" cy="0.35" r="0.7"><stop offset="0" stop-color="#b4d6f8"/><stop offset="1" stop-color="#4f8ee0"/></radialGradient>
<radialGradient id="bR" cx="0.38" cy="0.32" r="0.75"><stop offset="0" stop-color="#ff6a62"/><stop offset="0.5" stop-color="#e8222c"/><stop offset="1" stop-color="#b80e1c"/></radialGradient>
<radialGradient id="bG" cx="0.4" cy="0.35" r="0.7"><stop offset="0" stop-color="#c4ee98"/><stop offset="1" stop-color="#6cb432"/></radialGradient>
</defs></svg>
</div></body></html>
